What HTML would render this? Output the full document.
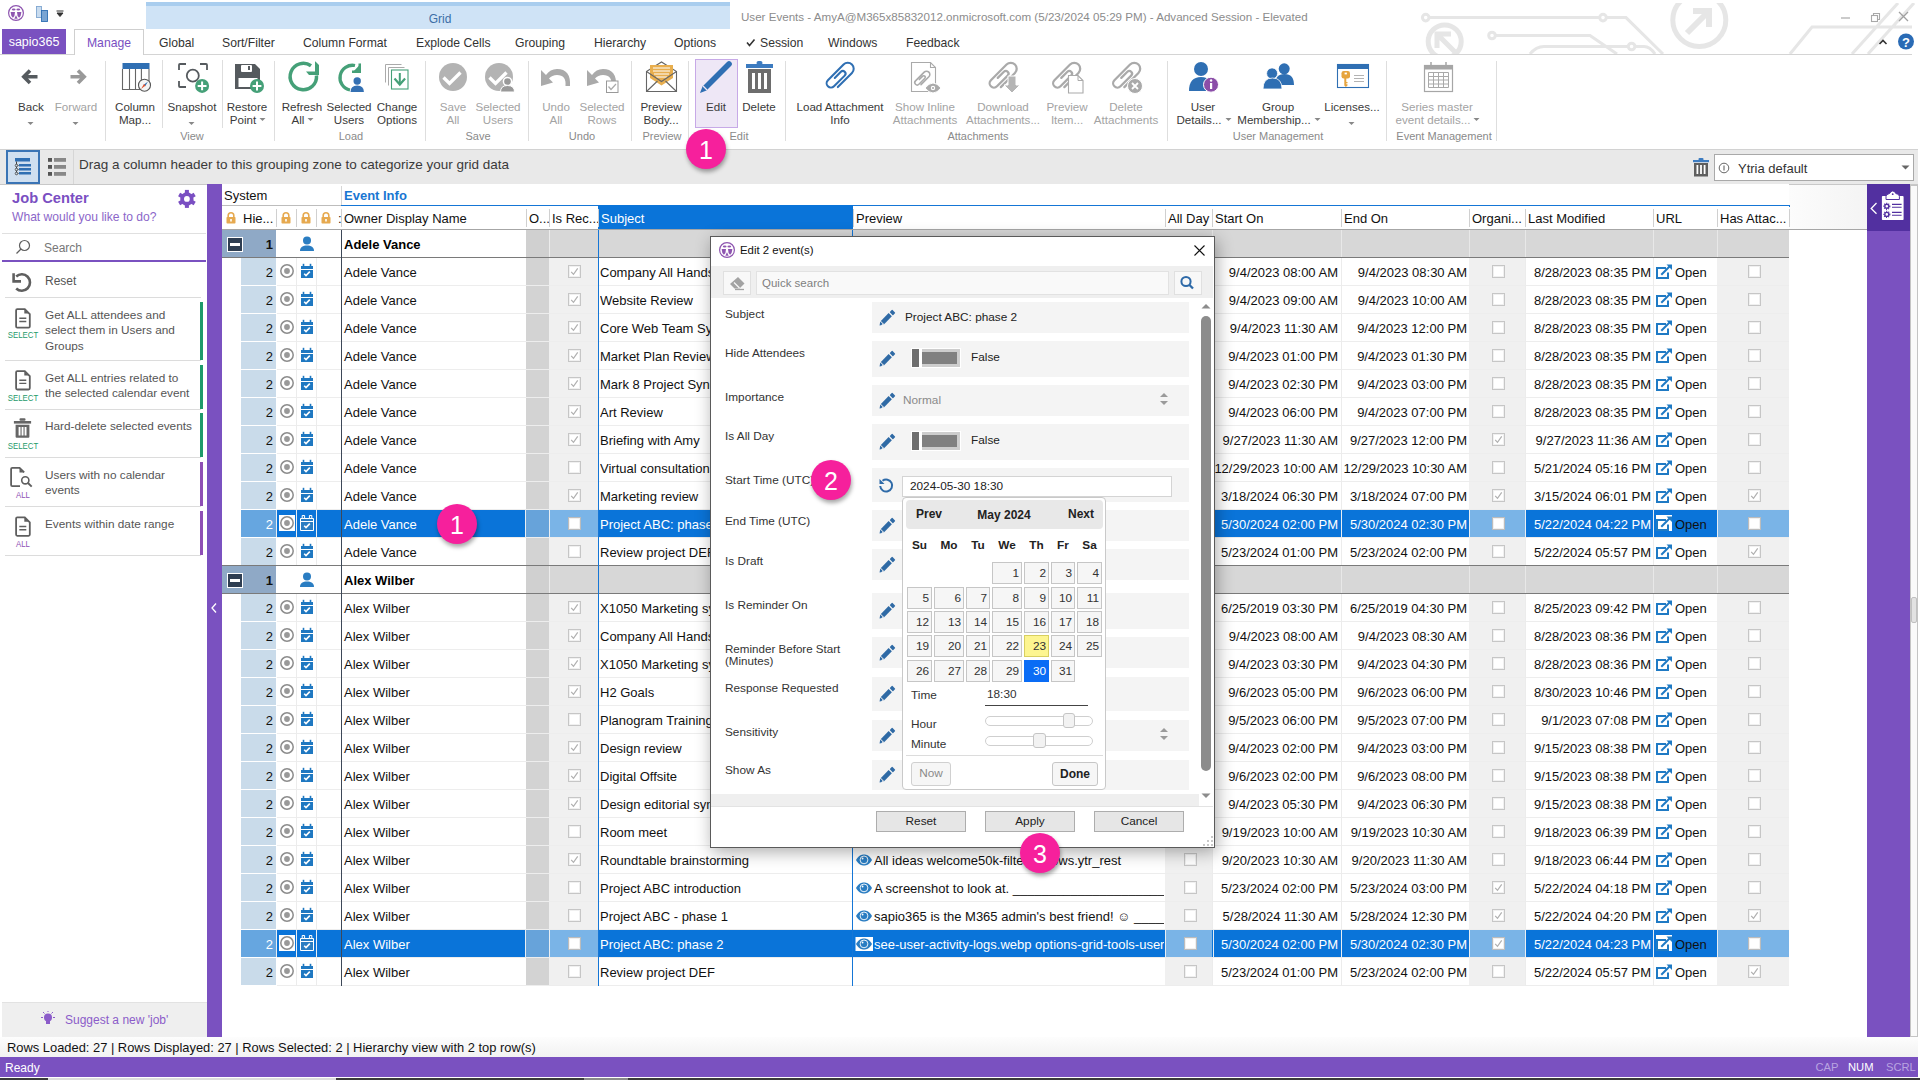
<!DOCTYPE html><html><head><meta charset="utf-8"><style>
*{margin:0;padding:0;box-sizing:border-box}
html,body{width:1920px;height:1080px;overflow:hidden;background:#fff;font-family:"Liberation Sans",sans-serif}
#r{position:relative;width:1920px;height:1080px;overflow:hidden}
#r div{position:absolute}
#r svg{position:absolute;overflow:visible}
.t{white-space:pre}
</style></head><body><div id="r"><div style="left:146px;top:2px;width:584px;height:4px;background:#a9cdee"></div><div style="left:146px;top:6px;width:584px;height:23px;background:#cfe3f6"></div><div class="t" style="left:140px;width:600px;text-align:center;top:11.0px;font-size:12px;line-height:16px;color:#3c6ea6;">Grid</div><div class="t" style="left:741px;top:9.0px;font-size:11.6px;line-height:15px;color:#8c8c8c;">User Events - AmyA@M365x85832012.onmicrosoft.com (5/23/2024 05:29 PM) - Advanced Session - Elevated</div><div style="left:0px;top:54px;width:1912px;height:1px;background:#d4d4d4"></div><div style="left:2px;top:29px;width:64px;height:25px;background:#7a51c0"></div><div class="t" style="left:-266px;width:600px;text-align:center;top:33.5px;font-size:12.5px;line-height:16px;color:#fff;">sapio365</div><div style="left:74px;top:29px;width:70px;height:26px;background:#fff;border:1px solid #cfcfcf;border-bottom:none"></div><div class="t" style="left:-191px;width:600px;text-align:center;top:34.5px;font-size:12.2px;line-height:16px;color:#7a4fc2;">Manage</div><div class="t" style="left:159px;top:34.5px;font-size:12.2px;line-height:16px;color:#333;">Global</div><div class="t" style="left:222px;top:34.5px;font-size:12.2px;line-height:16px;color:#333;">Sort/Filter</div><div class="t" style="left:303px;top:34.5px;font-size:12.2px;line-height:16px;color:#333;">Column Format</div><div class="t" style="left:416px;top:34.5px;font-size:12.2px;line-height:16px;color:#333;">Explode Cells</div><div class="t" style="left:515px;top:34.5px;font-size:12.2px;line-height:16px;color:#333;">Grouping</div><div class="t" style="left:594px;top:34.5px;font-size:12.2px;line-height:16px;color:#333;">Hierarchy</div><div class="t" style="left:674px;top:34.5px;font-size:12.2px;line-height:16px;color:#333;">Options</div><div class="t" style="left:760px;top:34.5px;font-size:12.2px;line-height:16px;color:#333;">Session</div><div class="t" style="left:828px;top:34.5px;font-size:12.2px;line-height:16px;color:#333;">Windows</div><div class="t" style="left:906px;top:34.5px;font-size:12.2px;line-height:16px;color:#333;">Feedback</div><div style="left:695px;top:59px;width:43px;height:69px;background:#eee7f6;border:1px solid #c7a9e7"></div><div class="t" style="left:-269px;width:600px;text-align:center;top:98.8px;font-size:11.6px;line-height:15px;color:#3a3a3a;">Back</div><svg style="left:27px;top:122px" width="8" height="4"><path d="M0.5 0h6l-3 3z" fill="#888"/></svg><div class="t" style="left:-224px;width:600px;text-align:center;top:98.8px;font-size:11.6px;line-height:15px;color:#a3a3a3;">Forward</div><svg style="left:72px;top:122px" width="8" height="4"><path d="M0.5 0h6l-3 3z" fill="#888"/></svg><div class="t" style="left:-165px;width:600px;text-align:center;top:98.8px;font-size:11.6px;line-height:15px;color:#3a3a3a;">Column</div><div class="t" style="left:-165px;width:600px;text-align:center;top:111.8px;font-size:11.6px;line-height:15px;color:#3a3a3a;">Map...</div><div class="t" style="left:-108px;width:600px;text-align:center;top:98.8px;font-size:11.6px;line-height:15px;color:#3a3a3a;">Snapshot</div><svg style="left:188px;top:122px" width="8" height="4"><path d="M0.5 0h6l-3 3z" fill="#888"/></svg><div class="t" style="left:-53px;width:600px;text-align:center;top:98.8px;font-size:11.6px;line-height:15px;color:#3a3a3a;">Restore</div><div class="t" style="left:-57px;width:600px;text-align:center;top:111.8px;font-size:11.6px;line-height:15px;color:#3a3a3a;">Point</div><svg style="left:259.21946875px;top:118px" width="8" height="4"><path d="M0.5 0h6l-3 3z" fill="#888"/></svg><div class="t" style="left:2px;width:600px;text-align:center;top:98.8px;font-size:11.6px;line-height:15px;color:#3a3a3a;">Refresh</div><div class="t" style="left:-2px;width:600px;text-align:center;top:111.8px;font-size:11.6px;line-height:15px;color:#3a3a3a;">All</div><svg style="left:307.44615625px;top:118px" width="8" height="4"><path d="M0.5 0h6l-3 3z" fill="#888"/></svg><div class="t" style="left:49px;width:600px;text-align:center;top:98.8px;font-size:11.6px;line-height:15px;color:#3a3a3a;">Selected</div><div class="t" style="left:49px;width:600px;text-align:center;top:111.8px;font-size:11.6px;line-height:15px;color:#3a3a3a;">Users</div><div class="t" style="left:97px;width:600px;text-align:center;top:98.8px;font-size:11.6px;line-height:15px;color:#3a3a3a;">Change</div><div class="t" style="left:97px;width:600px;text-align:center;top:111.8px;font-size:11.6px;line-height:15px;color:#3a3a3a;">Options</div><div class="t" style="left:153px;width:600px;text-align:center;top:98.8px;font-size:11.6px;line-height:15px;color:#a3a3a3;">Save</div><div class="t" style="left:153px;width:600px;text-align:center;top:111.8px;font-size:11.6px;line-height:15px;color:#a3a3a3;">All</div><div class="t" style="left:198px;width:600px;text-align:center;top:98.8px;font-size:11.6px;line-height:15px;color:#a3a3a3;">Selected</div><div class="t" style="left:198px;width:600px;text-align:center;top:111.8px;font-size:11.6px;line-height:15px;color:#a3a3a3;">Users</div><div class="t" style="left:256px;width:600px;text-align:center;top:98.8px;font-size:11.6px;line-height:15px;color:#a3a3a3;">Undo</div><div class="t" style="left:256px;width:600px;text-align:center;top:111.8px;font-size:11.6px;line-height:15px;color:#a3a3a3;">All</div><div class="t" style="left:302px;width:600px;text-align:center;top:98.8px;font-size:11.6px;line-height:15px;color:#a3a3a3;">Selected</div><div class="t" style="left:302px;width:600px;text-align:center;top:111.8px;font-size:11.6px;line-height:15px;color:#a3a3a3;">Rows</div><div class="t" style="left:361px;width:600px;text-align:center;top:98.8px;font-size:11.6px;line-height:15px;color:#3a3a3a;">Preview</div><div class="t" style="left:361px;width:600px;text-align:center;top:111.8px;font-size:11.6px;line-height:15px;color:#3a3a3a;">Body...</div><div class="t" style="left:416px;width:600px;text-align:center;top:98.8px;font-size:11.6px;line-height:15px;color:#3a3a3a;">Edit</div><div class="t" style="left:459px;width:600px;text-align:center;top:98.8px;font-size:11.6px;line-height:15px;color:#3a3a3a;">Delete</div><div class="t" style="left:540px;width:600px;text-align:center;top:98.8px;font-size:11.6px;line-height:15px;color:#3a3a3a;">Load Attachment</div><div class="t" style="left:540px;width:600px;text-align:center;top:111.8px;font-size:11.6px;line-height:15px;color:#3a3a3a;">Info</div><div class="t" style="left:625px;width:600px;text-align:center;top:98.8px;font-size:11.6px;line-height:15px;color:#a3a3a3;">Show Inline</div><div class="t" style="left:625px;width:600px;text-align:center;top:111.8px;font-size:11.6px;line-height:15px;color:#a3a3a3;">Attachments</div><div class="t" style="left:703px;width:600px;text-align:center;top:98.8px;font-size:11.6px;line-height:15px;color:#a3a3a3;">Download</div><div class="t" style="left:703px;width:600px;text-align:center;top:111.8px;font-size:11.6px;line-height:15px;color:#a3a3a3;">Attachments...</div><div class="t" style="left:767px;width:600px;text-align:center;top:98.8px;font-size:11.6px;line-height:15px;color:#a3a3a3;">Preview</div><div class="t" style="left:767px;width:600px;text-align:center;top:111.8px;font-size:11.6px;line-height:15px;color:#a3a3a3;">Item...</div><div class="t" style="left:826px;width:600px;text-align:center;top:98.8px;font-size:11.6px;line-height:15px;color:#a3a3a3;">Delete</div><div class="t" style="left:826px;width:600px;text-align:center;top:111.8px;font-size:11.6px;line-height:15px;color:#a3a3a3;">Attachments</div><div class="t" style="left:903px;width:600px;text-align:center;top:98.8px;font-size:11.6px;line-height:15px;color:#3a3a3a;">User</div><div class="t" style="left:899px;width:600px;text-align:center;top:111.8px;font-size:11.6px;line-height:15px;color:#3a3a3a;">Details...</div><svg style="left:1224.562px;top:118px" width="8" height="4"><path d="M0.5 0h6l-3 3z" fill="#888"/></svg><div class="t" style="left:978px;width:600px;text-align:center;top:98.8px;font-size:11.6px;line-height:15px;color:#3a3a3a;">Group</div><div class="t" style="left:974px;width:600px;text-align:center;top:111.8px;font-size:11.6px;line-height:15px;color:#3a3a3a;">Membership...</div><svg style="left:1313.743px;top:118px" width="8" height="4"><path d="M0.5 0h6l-3 3z" fill="#888"/></svg><div class="t" style="left:1052px;width:600px;text-align:center;top:98.8px;font-size:11.6px;line-height:15px;color:#3a3a3a;">Licenses...</div><svg style="left:1348px;top:122px" width="8" height="4"><path d="M0.5 0h6l-3 3z" fill="#888"/></svg><div class="t" style="left:1137px;width:600px;text-align:center;top:98.8px;font-size:11.6px;line-height:15px;color:#a3a3a3;">Series master</div><div class="t" style="left:1133px;width:600px;text-align:center;top:111.8px;font-size:11.6px;line-height:15px;color:#a3a3a3;">event details...</div><svg style="left:1473.3973125px;top:118px" width="8" height="4"><path d="M0.5 0h6l-3 3z" fill="#888"/></svg><div class="t" style="left:-108px;width:600px;text-align:center;top:129.0px;font-size:11px;line-height:14px;color:#8a8a8a;">View</div><div class="t" style="left:51px;width:600px;text-align:center;top:129.0px;font-size:11px;line-height:14px;color:#8a8a8a;">Load</div><div class="t" style="left:178px;width:600px;text-align:center;top:129.0px;font-size:11px;line-height:14px;color:#8a8a8a;">Save</div><div class="t" style="left:282px;width:600px;text-align:center;top:129.0px;font-size:11px;line-height:14px;color:#8a8a8a;">Undo</div><div class="t" style="left:362px;width:600px;text-align:center;top:129.0px;font-size:11px;line-height:14px;color:#8a8a8a;">Preview</div><div class="t" style="left:439px;width:600px;text-align:center;top:129.0px;font-size:11px;line-height:14px;color:#8a8a8a;">Edit</div><div class="t" style="left:678px;width:600px;text-align:center;top:129.0px;font-size:11px;line-height:14px;color:#8a8a8a;">Attachments</div><div class="t" style="left:978px;width:600px;text-align:center;top:129.0px;font-size:11px;line-height:14px;color:#8a8a8a;">User Management</div><div class="t" style="left:1144px;width:600px;text-align:center;top:129.0px;font-size:11px;line-height:14px;color:#8a8a8a;">Event Management</div><div style="left:105px;top:61px;width:1px;height:80px;background:#dedede"></div><div style="left:162px;top:60px;width:1px;height:68px;background:#dedede"></div><div style="left:222px;top:60px;width:1px;height:68px;background:#dedede"></div><div style="left:274px;top:61px;width:1px;height:80px;background:#dedede"></div><div style="left:425px;top:61px;width:1px;height:80px;background:#dedede"></div><div style="left:528px;top:61px;width:1px;height:80px;background:#dedede"></div><div style="left:631px;top:61px;width:1px;height:80px;background:#dedede"></div><div style="left:688px;top:61px;width:1px;height:80px;background:#dedede"></div><div style="left:785px;top:61px;width:1px;height:80px;background:#dedede"></div><div style="left:1167px;top:61px;width:1px;height:80px;background:#dedede"></div><div style="left:1386px;top:61px;width:1px;height:80px;background:#dedede"></div><div style="left:1496px;top:61px;width:1px;height:80px;background:#dedede"></div><div style="left:0px;top:149px;width:1918px;height:36px;background:#e9e9e9;border-top:1px solid #d2d2d2;border-bottom:1px solid #c8c8c8"></div><div style="left:6px;top:150px;width:34px;height:34px;background:#cfdff0;border:2px solid #3a74b5"></div><div style="left:40px;top:150px;width:34px;height:34px;background:#e9e9e9;border-right:1px solid #d6d6d6"></div><div class="t" style="left:79px;top:156.0px;font-size:13.5px;line-height:18px;color:#3a3a3a;">Drag a column header to this grouping zone to categorize your grid data</div><div style="left:1714px;top:154px;width:200px;height:27px;background:#fff;border:1px solid #a9a9a9"></div><div class="t" style="left:1738px;top:159.5px;font-size:13px;line-height:17px;color:#333;">Ytria default</div><div style="left:207px;top:184px;width:15px;height:853px;background:#7a51c0"></div><div class="t" style="left:12px;top:189.0px;font-size:14.7px;line-height:19px;color:#7a4fc2;font-weight:bold;">Job Center</div><div class="t" style="left:12px;top:208.5px;font-size:12.1px;line-height:16px;color:#8b66c9;">What would you like to do?</div><div style="left:2px;top:233px;width:204px;height:1px;background:#e0e0e0"></div><div class="t" style="left:44px;top:239.5px;font-size:12px;line-height:16px;color:#777;">Search</div><div style="left:2px;top:260px;width:204px;height:2px;background:#7a51c0"></div><div class="t" style="left:45px;top:273.0px;font-size:12px;line-height:16px;color:#555;">Reset</div><div style="left:5px;top:297px;width:196px;height:1px;background:#dcdcdc"></div><div class="t" style="left:45px;top:307.5px;font-size:11.8px;line-height:15px;color:#555;">Get ALL attendees and</div><div class="t" style="left:45px;top:323.0px;font-size:11.8px;line-height:15px;color:#555;">select them in Users and</div><div class="t" style="left:45px;top:338.5px;font-size:11.8px;line-height:15px;color:#555;">Groups</div><div style="left:200px;top:302px;width:3px;height:58px;background:#1e9a6a"></div><div style="left:5px;top:360px;width:196px;height:1px;background:#dcdcdc"></div><div class="t" style="left:-277.5px;width:600px;text-align:center;top:329.0px;font-size:9.3px;line-height:12px;color:#1e9a6a;transform:scaleX(0.84);">SELECT</div><div class="t" style="left:45px;top:370.5px;font-size:11.8px;line-height:15px;color:#555;">Get ALL entries related to</div><div class="t" style="left:45px;top:386.0px;font-size:11.8px;line-height:15px;color:#555;">the selected calendar event</div><div style="left:200px;top:365px;width:3px;height:44px;background:#1e9a6a"></div><div style="left:5px;top:409px;width:196px;height:1px;background:#dcdcdc"></div><div class="t" style="left:-277.5px;width:600px;text-align:center;top:392.0px;font-size:9.3px;line-height:12px;color:#1e9a6a;transform:scaleX(0.84);">SELECT</div><div class="t" style="left:45px;top:418.5px;font-size:11.8px;line-height:15px;color:#555;">Hard-delete selected events</div><div style="left:200px;top:413px;width:3px;height:44px;background:#1e9a6a"></div><div style="left:5px;top:457px;width:196px;height:1px;background:#dcdcdc"></div><div class="t" style="left:-277.5px;width:600px;text-align:center;top:440.0px;font-size:9.3px;line-height:12px;color:#1e9a6a;transform:scaleX(0.84);">SELECT</div><div class="t" style="left:45px;top:467.5px;font-size:11.8px;line-height:15px;color:#555;">Users with no calendar</div><div class="t" style="left:45px;top:483.0px;font-size:11.8px;line-height:15px;color:#555;">events</div><div style="left:200px;top:462px;width:3px;height:44px;background:#8e4fb5"></div><div style="left:5px;top:506px;width:196px;height:1px;background:#dcdcdc"></div><div class="t" style="left:-277.5px;width:600px;text-align:center;top:489.0px;font-size:9.3px;line-height:12px;color:#8e4fb5;transform:scaleX(0.84);">ALL</div><div class="t" style="left:45px;top:516.5px;font-size:11.8px;line-height:15px;color:#555;">Events within date range</div><div style="left:200px;top:511px;width:3px;height:44px;background:#8e4fb5"></div><div style="left:5px;top:555px;width:196px;height:1px;background:#dcdcdc"></div><div class="t" style="left:-277.5px;width:600px;text-align:center;top:538.0px;font-size:9.3px;line-height:12px;color:#8e4fb5;transform:scaleX(0.84);">ALL</div><div style="left:2px;top:1002px;width:205px;height:35px;background:#efefef;border-top:1px solid #e2e2e2"></div><div class="t" style="left:65px;top:1012.0px;font-size:12px;line-height:16px;color:#8b5cc9;">Suggest a new &#x27;job&#x27;</div><div style="left:222px;top:184px;width:1567px;height:22px;background:#fff"></div><div style="left:1789px;top:185px;width:78px;height:44px;background:linear-gradient(90deg,#fcfcfc,#f4f4f4)"></div><div class="t" style="left:224px;top:187.0px;font-size:13px;line-height:17px;color:#111;">System</div><div style="left:341px;top:186px;width:1px;height:20px;background:#d6d6d6"></div><div class="t" style="left:344px;top:187.0px;font-size:13px;line-height:17px;color:#1976d2;font-weight:bold;">Event Info</div><div style="left:222px;top:205px;width:119px;height:1px;background:#bdbdbd"></div><div style="left:341px;top:205px;width:1449px;height:2px;background:#1576d6"></div><div style="left:222px;top:206px;width:1567px;height:24px;background:#fff"></div><div style="left:222px;top:229px;width:1645px;height:1px;background:#a6a6a6"></div><div style="left:598px;top:205px;width:255px;height:24px;background:#0a74d9"></div><div class="t" style="left:243px;top:209.5px;font-size:13px;line-height:17px;color:#111;">Hie...</div><div style="left:276px;top:209px;width:1px;height:18px;background:#d0d0d0"></div><div class="t" style="left:279px;top:209.5px;font-size:13px;line-height:17px;color:#111;"></div><div style="left:296px;top:209px;width:1px;height:18px;background:#d0d0d0"></div><div class="t" style="left:299px;top:209.5px;font-size:13px;line-height:17px;color:#111;"></div><div style="left:316px;top:209px;width:1px;height:18px;background:#d0d0d0"></div><div class="t" style="left:338px;top:209.5px;font-size:13px;line-height:17px;color:#111;">:</div><div style="left:341px;top:209px;width:1px;height:18px;background:#d0d0d0"></div><div class="t" style="left:344px;top:209.5px;font-size:13px;line-height:17px;color:#111;">Owner Display Name</div><div style="left:526px;top:209px;width:1px;height:18px;background:#d0d0d0"></div><div class="t" style="left:529px;top:209.5px;font-size:13px;line-height:17px;color:#111;">O...</div><div style="left:549px;top:209px;width:1px;height:18px;background:#d0d0d0"></div><div class="t" style="left:552px;top:209.5px;font-size:13px;line-height:17px;color:#111;">Is Rec...</div><div style="left:598px;top:209px;width:1px;height:18px;background:#d0d0d0"></div><div class="t" style="left:601px;top:209.5px;font-size:13px;line-height:17px;color:#fff;">Subject</div><div style="left:853px;top:209px;width:1px;height:18px;background:#d0d0d0"></div><div class="t" style="left:856px;top:209.5px;font-size:13px;line-height:17px;color:#111;">Preview</div><div style="left:1165px;top:209px;width:1px;height:18px;background:#d0d0d0"></div><div class="t" style="left:1168px;top:209.5px;font-size:13px;line-height:17px;color:#111;">All Day</div><div style="left:1212px;top:209px;width:1px;height:18px;background:#d0d0d0"></div><div class="t" style="left:1215px;top:209.5px;font-size:13px;line-height:17px;color:#111;">Start On</div><div style="left:1341px;top:209px;width:1px;height:18px;background:#d0d0d0"></div><div class="t" style="left:1344px;top:209.5px;font-size:13px;line-height:17px;color:#111;">End On</div><div style="left:1469px;top:209px;width:1px;height:18px;background:#d0d0d0"></div><div class="t" style="left:1472px;top:209.5px;font-size:13px;line-height:17px;color:#111;">Organi...</div><div style="left:1525px;top:209px;width:1px;height:18px;background:#d0d0d0"></div><div class="t" style="left:1528px;top:209.5px;font-size:13px;line-height:17px;color:#111;">Last Modified</div><div style="left:1653px;top:209px;width:1px;height:18px;background:#d0d0d0"></div><div class="t" style="left:1656px;top:209.5px;font-size:13px;line-height:17px;color:#111;">URL</div><div style="left:1717px;top:209px;width:1px;height:18px;background:#d0d0d0"></div><div class="t" style="left:1720px;top:209.5px;font-size:13px;line-height:17px;color:#111;">Has Attac...</div><div style="left:1789px;top:209px;width:1px;height:18px;background:#d0d0d0"></div><svg style="left:226px;top:212px" width="10" height="12"><path d="M2.2 5V3.5a2.8 2.8 0 0 1 5.6 0V5" fill="none" stroke="#e6a94f" stroke-width="1.6"/><rect x="0.5" y="5" width="9" height="6.5" rx="0.8" fill="#e6a94f"/><rect x="4.2" y="7" width="1.6" height="2.5" fill="#fff"/></svg><svg style="left:281px;top:212px" width="10" height="12"><path d="M2.2 5V3.5a2.8 2.8 0 0 1 5.6 0V5" fill="none" stroke="#e6a94f" stroke-width="1.6"/><rect x="0.5" y="5" width="9" height="6.5" rx="0.8" fill="#e6a94f"/><rect x="4.2" y="7" width="1.6" height="2.5" fill="#fff"/></svg><svg style="left:301px;top:212px" width="10" height="12"><path d="M2.2 5V3.5a2.8 2.8 0 0 1 5.6 0V5" fill="none" stroke="#e6a94f" stroke-width="1.6"/><rect x="0.5" y="5" width="9" height="6.5" rx="0.8" fill="#e6a94f"/><rect x="4.2" y="7" width="1.6" height="2.5" fill="#fff"/></svg><svg style="left:321px;top:212px" width="10" height="12"><path d="M2.2 5V3.5a2.8 2.8 0 0 1 5.6 0V5" fill="none" stroke="#e6a94f" stroke-width="1.6"/><rect x="0.5" y="5" width="9" height="6.5" rx="0.8" fill="#e6a94f"/><rect x="4.2" y="7" width="1.6" height="2.5" fill="#fff"/></svg><div style="left:222px;top:230px;width:1567px;height:28px;background:#fff;border-bottom:1px solid #7a7a7a"></div><div style="left:222px;top:230px;width:54px;height:27px;background:#8fa9c6"></div><div style="left:227px;top:237px;width:16px;height:15px;background:#2f3e52;border:1px solid #fff"></div><div style="left:230px;top:243px;width:10px;height:3px;background:#fff"></div><div class="t" style="right:1647px;top:235.5px;font-size:13px;line-height:17px;color:#111;font-weight:bold;">1</div><svg style="left:307px;top:244px" width="1" height="1"><circle cx="0" cy="-3.5" r="4" fill="#2a7dc2"/><path d="M-7 7c0-4 3-5.5 7-5.5s7 1.5 7 5.5z" fill="#2a7dc2"/></svg><div class="t" style="left:344px;top:235.5px;font-size:13px;line-height:17px;color:#000;font-weight:bold;">Adele Vance</div><div style="left:526px;top:230px;width:23px;height:27px;background:#d0d0d0"></div><div style="left:549px;top:230px;width:1240px;height:27px;background:#d7d7d7"></div><div style="left:549px;top:230px;width:1px;height:27px;background:#ececec"></div><div style="left:1212px;top:230px;width:1px;height:27px;background:#e8e8e8"></div><div style="left:1341px;top:230px;width:1px;height:27px;background:#e8e8e8"></div><div style="left:1469px;top:230px;width:1px;height:27px;background:#e8e8e8"></div><div style="left:1525px;top:230px;width:1px;height:27px;background:#e8e8e8"></div><div style="left:1653px;top:230px;width:1px;height:27px;background:#e8e8e8"></div><div style="left:1717px;top:230px;width:1px;height:27px;background:#e8e8e8"></div><div style="left:241px;top:258px;width:35px;height:27px;background:#c9dbea"></div><div style="left:526px;top:258px;width:23px;height:28px;background:#d3d3d3"></div><div style="left:549px;top:258px;width:49px;height:28px;background:#f0f0f0"></div><div style="left:1165px;top:258px;width:47px;height:28px;background:#f0f0f0"></div><div style="left:1469px;top:258px;width:56px;height:28px;background:#f0f0f0"></div><div style="left:1717px;top:258px;width:72px;height:28px;background:#f0f0f0"></div><div style="left:277px;top:285px;width:1512px;height:1px;background:#ededed"></div><div style="left:296px;top:258px;width:1px;height:28px;background:#ececec"></div><div style="left:316px;top:258px;width:1px;height:28px;background:#ececec"></div><div style="left:1212px;top:258px;width:1px;height:28px;background:#ececec"></div><div style="left:1341px;top:258px;width:1px;height:28px;background:#ececec"></div><div style="left:1525px;top:258px;width:1px;height:28px;background:#ececec"></div><div style="left:1653px;top:258px;width:1px;height:28px;background:#ececec"></div><div class="t" style="right:1647px;top:264.0px;font-size:13px;line-height:17px;color:#111;">2</div><svg style="left:287px;top:271px" width="1" height="1"><circle cx="0" cy="0" r="6.2" fill="none" stroke="#8c8c8c" stroke-width="1.5"/><circle cx="0" cy="0" r="2.9" fill="#999"/></svg><svg style="left:307px;top:271px" width="1" height="1"><rect x="-6" y="-5" width="12" height="3" fill="#1f78c1"/><rect x="-4.3" y="-7.2" width="1.6" height="2.5" fill="#1f78c1"/><rect x="2.7" y="-7.2" width="1.6" height="2.5" fill="#1f78c1"/><rect x="-6" y="-1" width="12" height="8" fill="#1f78c1"/><path d="M-2.8 2.8l1.8 1.8 3.8-4" stroke="#fff" stroke-width="1.6" fill="none"/></svg><div class="t" style="left:344px;top:264.0px;font-size:13px;line-height:17px;color:#111;">Adele Vance</div><svg style="left:568px;top:265px" width="13" height="13"><rect x="0.5" y="0.5" width="12" height="12" fill="#fff" stroke="#c6c6c6"/><rect x="1.5" y="1.5" width="10" height="10" fill="none" stroke="#f0f0f0"/><path d="M3.2 6.8l2.3 2.6 4.2-6" stroke="#b0b0b0" stroke-width="1.2" fill="none"/></svg><div class="t" style="left:600px;top:264px;width:252px;overflow:hidden;font-size:13px;line-height:18px;color:#111">Company All Hands</div><svg style="left:1184px;top:265px" width="13" height="13"><rect x="0.5" y="0.5" width="12" height="12" fill="#fff" stroke="#c6c6c6"/><rect x="1.5" y="1.5" width="10" height="10" fill="none" stroke="#f0f0f0"/></svg><div class="t" style="right:582px;top:264.0px;font-size:13px;line-height:17px;color:#111;">9/4/2023 08:00 AM</div><div class="t" style="right:453px;top:264.0px;font-size:13px;line-height:17px;color:#111;">9/4/2023 08:30 AM</div><svg style="left:1492px;top:265px" width="13" height="13"><rect x="0.5" y="0.5" width="12" height="12" fill="#fff" stroke="#c6c6c6"/><rect x="1.5" y="1.5" width="10" height="10" fill="none" stroke="#f0f0f0"/></svg><div class="t" style="right:269px;top:264.0px;font-size:13px;line-height:17px;color:#111;">8/28/2023 08:35 PM</div><svg style="left:1656px;top:258px" width="18" height="24"><path d="M10 10H1V20H12V14.5" fill="none" stroke="#1f7ac4" stroke-width="2"/><path d="M5.3 16.7L13.5 8.5" stroke="#1f7ac4" stroke-width="2"/><path d="M10.5 6.6h5.5v5.5z" fill="#1f7ac4"/></svg><div class="t" style="left:1675px;top:264.0px;font-size:13px;line-height:17px;color:#111;">Open</div><svg style="left:1748px;top:265px" width="13" height="13"><rect x="0.5" y="0.5" width="12" height="12" fill="#fff" stroke="#c6c6c6"/><rect x="1.5" y="1.5" width="10" height="10" fill="none" stroke="#f0f0f0"/></svg><div style="left:241px;top:286px;width:35px;height:27px;background:#c9dbea"></div><div style="left:526px;top:286px;width:23px;height:28px;background:#d3d3d3"></div><div style="left:549px;top:286px;width:49px;height:28px;background:#f0f0f0"></div><div style="left:1165px;top:286px;width:47px;height:28px;background:#f0f0f0"></div><div style="left:1469px;top:286px;width:56px;height:28px;background:#f0f0f0"></div><div style="left:1717px;top:286px;width:72px;height:28px;background:#f0f0f0"></div><div style="left:277px;top:313px;width:1512px;height:1px;background:#ededed"></div><div style="left:296px;top:286px;width:1px;height:28px;background:#ececec"></div><div style="left:316px;top:286px;width:1px;height:28px;background:#ececec"></div><div style="left:1212px;top:286px;width:1px;height:28px;background:#ececec"></div><div style="left:1341px;top:286px;width:1px;height:28px;background:#ececec"></div><div style="left:1525px;top:286px;width:1px;height:28px;background:#ececec"></div><div style="left:1653px;top:286px;width:1px;height:28px;background:#ececec"></div><div class="t" style="right:1647px;top:292.0px;font-size:13px;line-height:17px;color:#111;">2</div><svg style="left:287px;top:299px" width="1" height="1"><circle cx="0" cy="0" r="6.2" fill="none" stroke="#8c8c8c" stroke-width="1.5"/><circle cx="0" cy="0" r="2.9" fill="#999"/></svg><svg style="left:307px;top:299px" width="1" height="1"><rect x="-6" y="-5" width="12" height="3" fill="#1f78c1"/><rect x="-4.3" y="-7.2" width="1.6" height="2.5" fill="#1f78c1"/><rect x="2.7" y="-7.2" width="1.6" height="2.5" fill="#1f78c1"/><rect x="-6" y="-1" width="12" height="8" fill="#1f78c1"/><path d="M-2.8 2.8l1.8 1.8 3.8-4" stroke="#fff" stroke-width="1.6" fill="none"/></svg><div class="t" style="left:344px;top:292.0px;font-size:13px;line-height:17px;color:#111;">Adele Vance</div><svg style="left:568px;top:293px" width="13" height="13"><rect x="0.5" y="0.5" width="12" height="12" fill="#fff" stroke="#c6c6c6"/><rect x="1.5" y="1.5" width="10" height="10" fill="none" stroke="#f0f0f0"/><path d="M3.2 6.8l2.3 2.6 4.2-6" stroke="#b0b0b0" stroke-width="1.2" fill="none"/></svg><div class="t" style="left:600px;top:292px;width:252px;overflow:hidden;font-size:13px;line-height:18px;color:#111">Website Review</div><svg style="left:1184px;top:293px" width="13" height="13"><rect x="0.5" y="0.5" width="12" height="12" fill="#fff" stroke="#c6c6c6"/><rect x="1.5" y="1.5" width="10" height="10" fill="none" stroke="#f0f0f0"/></svg><div class="t" style="right:582px;top:292.0px;font-size:13px;line-height:17px;color:#111;">9/4/2023 09:00 AM</div><div class="t" style="right:453px;top:292.0px;font-size:13px;line-height:17px;color:#111;">9/4/2023 10:00 AM</div><svg style="left:1492px;top:293px" width="13" height="13"><rect x="0.5" y="0.5" width="12" height="12" fill="#fff" stroke="#c6c6c6"/><rect x="1.5" y="1.5" width="10" height="10" fill="none" stroke="#f0f0f0"/></svg><div class="t" style="right:269px;top:292.0px;font-size:13px;line-height:17px;color:#111;">8/28/2023 08:35 PM</div><svg style="left:1656px;top:286px" width="18" height="24"><path d="M10 10H1V20H12V14.5" fill="none" stroke="#1f7ac4" stroke-width="2"/><path d="M5.3 16.7L13.5 8.5" stroke="#1f7ac4" stroke-width="2"/><path d="M10.5 6.6h5.5v5.5z" fill="#1f7ac4"/></svg><div class="t" style="left:1675px;top:292.0px;font-size:13px;line-height:17px;color:#111;">Open</div><svg style="left:1748px;top:293px" width="13" height="13"><rect x="0.5" y="0.5" width="12" height="12" fill="#fff" stroke="#c6c6c6"/><rect x="1.5" y="1.5" width="10" height="10" fill="none" stroke="#f0f0f0"/></svg><div style="left:241px;top:314px;width:35px;height:27px;background:#c9dbea"></div><div style="left:526px;top:314px;width:23px;height:28px;background:#d3d3d3"></div><div style="left:549px;top:314px;width:49px;height:28px;background:#f0f0f0"></div><div style="left:1165px;top:314px;width:47px;height:28px;background:#f0f0f0"></div><div style="left:1469px;top:314px;width:56px;height:28px;background:#f0f0f0"></div><div style="left:1717px;top:314px;width:72px;height:28px;background:#f0f0f0"></div><div style="left:277px;top:341px;width:1512px;height:1px;background:#ededed"></div><div style="left:296px;top:314px;width:1px;height:28px;background:#ececec"></div><div style="left:316px;top:314px;width:1px;height:28px;background:#ececec"></div><div style="left:1212px;top:314px;width:1px;height:28px;background:#ececec"></div><div style="left:1341px;top:314px;width:1px;height:28px;background:#ececec"></div><div style="left:1525px;top:314px;width:1px;height:28px;background:#ececec"></div><div style="left:1653px;top:314px;width:1px;height:28px;background:#ececec"></div><div class="t" style="right:1647px;top:320.0px;font-size:13px;line-height:17px;color:#111;">2</div><svg style="left:287px;top:327px" width="1" height="1"><circle cx="0" cy="0" r="6.2" fill="none" stroke="#8c8c8c" stroke-width="1.5"/><circle cx="0" cy="0" r="2.9" fill="#999"/></svg><svg style="left:307px;top:327px" width="1" height="1"><rect x="-6" y="-5" width="12" height="3" fill="#1f78c1"/><rect x="-4.3" y="-7.2" width="1.6" height="2.5" fill="#1f78c1"/><rect x="2.7" y="-7.2" width="1.6" height="2.5" fill="#1f78c1"/><rect x="-6" y="-1" width="12" height="8" fill="#1f78c1"/><path d="M-2.8 2.8l1.8 1.8 3.8-4" stroke="#fff" stroke-width="1.6" fill="none"/></svg><div class="t" style="left:344px;top:320.0px;font-size:13px;line-height:17px;color:#111;">Adele Vance</div><svg style="left:568px;top:321px" width="13" height="13"><rect x="0.5" y="0.5" width="12" height="12" fill="#fff" stroke="#c6c6c6"/><rect x="1.5" y="1.5" width="10" height="10" fill="none" stroke="#f0f0f0"/><path d="M3.2 6.8l2.3 2.6 4.2-6" stroke="#b0b0b0" stroke-width="1.2" fill="none"/></svg><div class="t" style="left:600px;top:320px;width:252px;overflow:hidden;font-size:13px;line-height:18px;color:#111">Core Web Team Sync</div><svg style="left:1184px;top:321px" width="13" height="13"><rect x="0.5" y="0.5" width="12" height="12" fill="#fff" stroke="#c6c6c6"/><rect x="1.5" y="1.5" width="10" height="10" fill="none" stroke="#f0f0f0"/></svg><div class="t" style="right:582px;top:320.0px;font-size:13px;line-height:17px;color:#111;">9/4/2023 11:30 AM</div><div class="t" style="right:453px;top:320.0px;font-size:13px;line-height:17px;color:#111;">9/4/2023 12:00 PM</div><svg style="left:1492px;top:321px" width="13" height="13"><rect x="0.5" y="0.5" width="12" height="12" fill="#fff" stroke="#c6c6c6"/><rect x="1.5" y="1.5" width="10" height="10" fill="none" stroke="#f0f0f0"/></svg><div class="t" style="right:269px;top:320.0px;font-size:13px;line-height:17px;color:#111;">8/28/2023 08:35 PM</div><svg style="left:1656px;top:314px" width="18" height="24"><path d="M10 10H1V20H12V14.5" fill="none" stroke="#1f7ac4" stroke-width="2"/><path d="M5.3 16.7L13.5 8.5" stroke="#1f7ac4" stroke-width="2"/><path d="M10.5 6.6h5.5v5.5z" fill="#1f7ac4"/></svg><div class="t" style="left:1675px;top:320.0px;font-size:13px;line-height:17px;color:#111;">Open</div><svg style="left:1748px;top:321px" width="13" height="13"><rect x="0.5" y="0.5" width="12" height="12" fill="#fff" stroke="#c6c6c6"/><rect x="1.5" y="1.5" width="10" height="10" fill="none" stroke="#f0f0f0"/></svg><div style="left:241px;top:342px;width:35px;height:27px;background:#c9dbea"></div><div style="left:526px;top:342px;width:23px;height:28px;background:#d3d3d3"></div><div style="left:549px;top:342px;width:49px;height:28px;background:#f0f0f0"></div><div style="left:1165px;top:342px;width:47px;height:28px;background:#f0f0f0"></div><div style="left:1469px;top:342px;width:56px;height:28px;background:#f0f0f0"></div><div style="left:1717px;top:342px;width:72px;height:28px;background:#f0f0f0"></div><div style="left:277px;top:369px;width:1512px;height:1px;background:#ededed"></div><div style="left:296px;top:342px;width:1px;height:28px;background:#ececec"></div><div style="left:316px;top:342px;width:1px;height:28px;background:#ececec"></div><div style="left:1212px;top:342px;width:1px;height:28px;background:#ececec"></div><div style="left:1341px;top:342px;width:1px;height:28px;background:#ececec"></div><div style="left:1525px;top:342px;width:1px;height:28px;background:#ececec"></div><div style="left:1653px;top:342px;width:1px;height:28px;background:#ececec"></div><div class="t" style="right:1647px;top:348.0px;font-size:13px;line-height:17px;color:#111;">2</div><svg style="left:287px;top:355px" width="1" height="1"><circle cx="0" cy="0" r="6.2" fill="none" stroke="#8c8c8c" stroke-width="1.5"/><circle cx="0" cy="0" r="2.9" fill="#999"/></svg><svg style="left:307px;top:355px" width="1" height="1"><rect x="-6" y="-5" width="12" height="3" fill="#1f78c1"/><rect x="-4.3" y="-7.2" width="1.6" height="2.5" fill="#1f78c1"/><rect x="2.7" y="-7.2" width="1.6" height="2.5" fill="#1f78c1"/><rect x="-6" y="-1" width="12" height="8" fill="#1f78c1"/><path d="M-2.8 2.8l1.8 1.8 3.8-4" stroke="#fff" stroke-width="1.6" fill="none"/></svg><div class="t" style="left:344px;top:348.0px;font-size:13px;line-height:17px;color:#111;">Adele Vance</div><svg style="left:568px;top:349px" width="13" height="13"><rect x="0.5" y="0.5" width="12" height="12" fill="#fff" stroke="#c6c6c6"/><rect x="1.5" y="1.5" width="10" height="10" fill="none" stroke="#f0f0f0"/><path d="M3.2 6.8l2.3 2.6 4.2-6" stroke="#b0b0b0" stroke-width="1.2" fill="none"/></svg><div class="t" style="left:600px;top:348px;width:252px;overflow:hidden;font-size:13px;line-height:18px;color:#111">Market Plan Review</div><svg style="left:1184px;top:349px" width="13" height="13"><rect x="0.5" y="0.5" width="12" height="12" fill="#fff" stroke="#c6c6c6"/><rect x="1.5" y="1.5" width="10" height="10" fill="none" stroke="#f0f0f0"/></svg><div class="t" style="right:582px;top:348.0px;font-size:13px;line-height:17px;color:#111;">9/4/2023 01:00 PM</div><div class="t" style="right:453px;top:348.0px;font-size:13px;line-height:17px;color:#111;">9/4/2023 01:30 PM</div><svg style="left:1492px;top:349px" width="13" height="13"><rect x="0.5" y="0.5" width="12" height="12" fill="#fff" stroke="#c6c6c6"/><rect x="1.5" y="1.5" width="10" height="10" fill="none" stroke="#f0f0f0"/></svg><div class="t" style="right:269px;top:348.0px;font-size:13px;line-height:17px;color:#111;">8/28/2023 08:35 PM</div><svg style="left:1656px;top:342px" width="18" height="24"><path d="M10 10H1V20H12V14.5" fill="none" stroke="#1f7ac4" stroke-width="2"/><path d="M5.3 16.7L13.5 8.5" stroke="#1f7ac4" stroke-width="2"/><path d="M10.5 6.6h5.5v5.5z" fill="#1f7ac4"/></svg><div class="t" style="left:1675px;top:348.0px;font-size:13px;line-height:17px;color:#111;">Open</div><svg style="left:1748px;top:349px" width="13" height="13"><rect x="0.5" y="0.5" width="12" height="12" fill="#fff" stroke="#c6c6c6"/><rect x="1.5" y="1.5" width="10" height="10" fill="none" stroke="#f0f0f0"/></svg><div style="left:241px;top:370px;width:35px;height:27px;background:#c9dbea"></div><div style="left:526px;top:370px;width:23px;height:28px;background:#d3d3d3"></div><div style="left:549px;top:370px;width:49px;height:28px;background:#f0f0f0"></div><div style="left:1165px;top:370px;width:47px;height:28px;background:#f0f0f0"></div><div style="left:1469px;top:370px;width:56px;height:28px;background:#f0f0f0"></div><div style="left:1717px;top:370px;width:72px;height:28px;background:#f0f0f0"></div><div style="left:277px;top:397px;width:1512px;height:1px;background:#ededed"></div><div style="left:296px;top:370px;width:1px;height:28px;background:#ececec"></div><div style="left:316px;top:370px;width:1px;height:28px;background:#ececec"></div><div style="left:1212px;top:370px;width:1px;height:28px;background:#ececec"></div><div style="left:1341px;top:370px;width:1px;height:28px;background:#ececec"></div><div style="left:1525px;top:370px;width:1px;height:28px;background:#ececec"></div><div style="left:1653px;top:370px;width:1px;height:28px;background:#ececec"></div><div class="t" style="right:1647px;top:376.0px;font-size:13px;line-height:17px;color:#111;">2</div><svg style="left:287px;top:383px" width="1" height="1"><circle cx="0" cy="0" r="6.2" fill="none" stroke="#8c8c8c" stroke-width="1.5"/><circle cx="0" cy="0" r="2.9" fill="#999"/></svg><svg style="left:307px;top:383px" width="1" height="1"><rect x="-6" y="-5" width="12" height="3" fill="#1f78c1"/><rect x="-4.3" y="-7.2" width="1.6" height="2.5" fill="#1f78c1"/><rect x="2.7" y="-7.2" width="1.6" height="2.5" fill="#1f78c1"/><rect x="-6" y="-1" width="12" height="8" fill="#1f78c1"/><path d="M-2.8 2.8l1.8 1.8 3.8-4" stroke="#fff" stroke-width="1.6" fill="none"/></svg><div class="t" style="left:344px;top:376.0px;font-size:13px;line-height:17px;color:#111;">Adele Vance</div><svg style="left:568px;top:377px" width="13" height="13"><rect x="0.5" y="0.5" width="12" height="12" fill="#fff" stroke="#c6c6c6"/><rect x="1.5" y="1.5" width="10" height="10" fill="none" stroke="#f0f0f0"/><path d="M3.2 6.8l2.3 2.6 4.2-6" stroke="#b0b0b0" stroke-width="1.2" fill="none"/></svg><div class="t" style="left:600px;top:376px;width:252px;overflow:hidden;font-size:13px;line-height:18px;color:#111">Mark 8 Project Sync</div><svg style="left:1184px;top:377px" width="13" height="13"><rect x="0.5" y="0.5" width="12" height="12" fill="#fff" stroke="#c6c6c6"/><rect x="1.5" y="1.5" width="10" height="10" fill="none" stroke="#f0f0f0"/></svg><div class="t" style="right:582px;top:376.0px;font-size:13px;line-height:17px;color:#111;">9/4/2023 02:30 PM</div><div class="t" style="right:453px;top:376.0px;font-size:13px;line-height:17px;color:#111;">9/4/2023 03:00 PM</div><svg style="left:1492px;top:377px" width="13" height="13"><rect x="0.5" y="0.5" width="12" height="12" fill="#fff" stroke="#c6c6c6"/><rect x="1.5" y="1.5" width="10" height="10" fill="none" stroke="#f0f0f0"/></svg><div class="t" style="right:269px;top:376.0px;font-size:13px;line-height:17px;color:#111;">8/28/2023 08:35 PM</div><svg style="left:1656px;top:370px" width="18" height="24"><path d="M10 10H1V20H12V14.5" fill="none" stroke="#1f7ac4" stroke-width="2"/><path d="M5.3 16.7L13.5 8.5" stroke="#1f7ac4" stroke-width="2"/><path d="M10.5 6.6h5.5v5.5z" fill="#1f7ac4"/></svg><div class="t" style="left:1675px;top:376.0px;font-size:13px;line-height:17px;color:#111;">Open</div><svg style="left:1748px;top:377px" width="13" height="13"><rect x="0.5" y="0.5" width="12" height="12" fill="#fff" stroke="#c6c6c6"/><rect x="1.5" y="1.5" width="10" height="10" fill="none" stroke="#f0f0f0"/></svg><div style="left:241px;top:398px;width:35px;height:27px;background:#c9dbea"></div><div style="left:526px;top:398px;width:23px;height:28px;background:#d3d3d3"></div><div style="left:549px;top:398px;width:49px;height:28px;background:#f0f0f0"></div><div style="left:1165px;top:398px;width:47px;height:28px;background:#f0f0f0"></div><div style="left:1469px;top:398px;width:56px;height:28px;background:#f0f0f0"></div><div style="left:1717px;top:398px;width:72px;height:28px;background:#f0f0f0"></div><div style="left:277px;top:425px;width:1512px;height:1px;background:#ededed"></div><div style="left:296px;top:398px;width:1px;height:28px;background:#ececec"></div><div style="left:316px;top:398px;width:1px;height:28px;background:#ececec"></div><div style="left:1212px;top:398px;width:1px;height:28px;background:#ececec"></div><div style="left:1341px;top:398px;width:1px;height:28px;background:#ececec"></div><div style="left:1525px;top:398px;width:1px;height:28px;background:#ececec"></div><div style="left:1653px;top:398px;width:1px;height:28px;background:#ececec"></div><div class="t" style="right:1647px;top:404.0px;font-size:13px;line-height:17px;color:#111;">2</div><svg style="left:287px;top:411px" width="1" height="1"><circle cx="0" cy="0" r="6.2" fill="none" stroke="#8c8c8c" stroke-width="1.5"/><circle cx="0" cy="0" r="2.9" fill="#999"/></svg><svg style="left:307px;top:411px" width="1" height="1"><rect x="-6" y="-5" width="12" height="3" fill="#1f78c1"/><rect x="-4.3" y="-7.2" width="1.6" height="2.5" fill="#1f78c1"/><rect x="2.7" y="-7.2" width="1.6" height="2.5" fill="#1f78c1"/><rect x="-6" y="-1" width="12" height="8" fill="#1f78c1"/><path d="M-2.8 2.8l1.8 1.8 3.8-4" stroke="#fff" stroke-width="1.6" fill="none"/></svg><div class="t" style="left:344px;top:404.0px;font-size:13px;line-height:17px;color:#111;">Adele Vance</div><svg style="left:568px;top:405px" width="13" height="13"><rect x="0.5" y="0.5" width="12" height="12" fill="#fff" stroke="#c6c6c6"/><rect x="1.5" y="1.5" width="10" height="10" fill="none" stroke="#f0f0f0"/><path d="M3.2 6.8l2.3 2.6 4.2-6" stroke="#b0b0b0" stroke-width="1.2" fill="none"/></svg><div class="t" style="left:600px;top:404px;width:252px;overflow:hidden;font-size:13px;line-height:18px;color:#111">Art Review</div><svg style="left:1184px;top:405px" width="13" height="13"><rect x="0.5" y="0.5" width="12" height="12" fill="#fff" stroke="#c6c6c6"/><rect x="1.5" y="1.5" width="10" height="10" fill="none" stroke="#f0f0f0"/></svg><div class="t" style="right:582px;top:404.0px;font-size:13px;line-height:17px;color:#111;">9/4/2023 06:00 PM</div><div class="t" style="right:453px;top:404.0px;font-size:13px;line-height:17px;color:#111;">9/4/2023 07:00 PM</div><svg style="left:1492px;top:405px" width="13" height="13"><rect x="0.5" y="0.5" width="12" height="12" fill="#fff" stroke="#c6c6c6"/><rect x="1.5" y="1.5" width="10" height="10" fill="none" stroke="#f0f0f0"/></svg><div class="t" style="right:269px;top:404.0px;font-size:13px;line-height:17px;color:#111;">8/28/2023 08:35 PM</div><svg style="left:1656px;top:398px" width="18" height="24"><path d="M10 10H1V20H12V14.5" fill="none" stroke="#1f7ac4" stroke-width="2"/><path d="M5.3 16.7L13.5 8.5" stroke="#1f7ac4" stroke-width="2"/><path d="M10.5 6.6h5.5v5.5z" fill="#1f7ac4"/></svg><div class="t" style="left:1675px;top:404.0px;font-size:13px;line-height:17px;color:#111;">Open</div><svg style="left:1748px;top:405px" width="13" height="13"><rect x="0.5" y="0.5" width="12" height="12" fill="#fff" stroke="#c6c6c6"/><rect x="1.5" y="1.5" width="10" height="10" fill="none" stroke="#f0f0f0"/></svg><div style="left:241px;top:426px;width:35px;height:27px;background:#c9dbea"></div><div style="left:526px;top:426px;width:23px;height:28px;background:#d3d3d3"></div><div style="left:549px;top:426px;width:49px;height:28px;background:#f0f0f0"></div><div style="left:1165px;top:426px;width:47px;height:28px;background:#f0f0f0"></div><div style="left:1469px;top:426px;width:56px;height:28px;background:#f0f0f0"></div><div style="left:1717px;top:426px;width:72px;height:28px;background:#f0f0f0"></div><div style="left:277px;top:453px;width:1512px;height:1px;background:#ededed"></div><div style="left:296px;top:426px;width:1px;height:28px;background:#ececec"></div><div style="left:316px;top:426px;width:1px;height:28px;background:#ececec"></div><div style="left:1212px;top:426px;width:1px;height:28px;background:#ececec"></div><div style="left:1341px;top:426px;width:1px;height:28px;background:#ececec"></div><div style="left:1525px;top:426px;width:1px;height:28px;background:#ececec"></div><div style="left:1653px;top:426px;width:1px;height:28px;background:#ececec"></div><div class="t" style="right:1647px;top:432.0px;font-size:13px;line-height:17px;color:#111;">2</div><svg style="left:287px;top:439px" width="1" height="1"><circle cx="0" cy="0" r="6.2" fill="none" stroke="#8c8c8c" stroke-width="1.5"/><circle cx="0" cy="0" r="2.9" fill="#999"/></svg><svg style="left:307px;top:439px" width="1" height="1"><rect x="-6" y="-5" width="12" height="3" fill="#1f78c1"/><rect x="-4.3" y="-7.2" width="1.6" height="2.5" fill="#1f78c1"/><rect x="2.7" y="-7.2" width="1.6" height="2.5" fill="#1f78c1"/><rect x="-6" y="-1" width="12" height="8" fill="#1f78c1"/><path d="M-2.8 2.8l1.8 1.8 3.8-4" stroke="#fff" stroke-width="1.6" fill="none"/></svg><div class="t" style="left:344px;top:432.0px;font-size:13px;line-height:17px;color:#111;">Adele Vance</div><svg style="left:568px;top:433px" width="13" height="13"><rect x="0.5" y="0.5" width="12" height="12" fill="#fff" stroke="#c6c6c6"/><rect x="1.5" y="1.5" width="10" height="10" fill="none" stroke="#f0f0f0"/><path d="M3.2 6.8l2.3 2.6 4.2-6" stroke="#b0b0b0" stroke-width="1.2" fill="none"/></svg><div class="t" style="left:600px;top:432px;width:252px;overflow:hidden;font-size:13px;line-height:18px;color:#111">Briefing with Amy</div><svg style="left:1184px;top:433px" width="13" height="13"><rect x="0.5" y="0.5" width="12" height="12" fill="#fff" stroke="#c6c6c6"/><rect x="1.5" y="1.5" width="10" height="10" fill="none" stroke="#f0f0f0"/></svg><div class="t" style="right:582px;top:432.0px;font-size:13px;line-height:17px;color:#111;">9/27/2023 11:30 AM</div><div class="t" style="right:453px;top:432.0px;font-size:13px;line-height:17px;color:#111;">9/27/2023 12:00 PM</div><svg style="left:1492px;top:433px" width="13" height="13"><rect x="0.5" y="0.5" width="12" height="12" fill="#fff" stroke="#c6c6c6"/><rect x="1.5" y="1.5" width="10" height="10" fill="none" stroke="#f0f0f0"/><path d="M3.2 6.8l2.3 2.6 4.2-6" stroke="#b0b0b0" stroke-width="1.2" fill="none"/></svg><div class="t" style="right:269px;top:432.0px;font-size:13px;line-height:17px;color:#111;">9/27/2023 11:36 AM</div><svg style="left:1656px;top:426px" width="18" height="24"><path d="M10 10H1V20H12V14.5" fill="none" stroke="#1f7ac4" stroke-width="2"/><path d="M5.3 16.7L13.5 8.5" stroke="#1f7ac4" stroke-width="2"/><path d="M10.5 6.6h5.5v5.5z" fill="#1f7ac4"/></svg><div class="t" style="left:1675px;top:432.0px;font-size:13px;line-height:17px;color:#111;">Open</div><svg style="left:1748px;top:433px" width="13" height="13"><rect x="0.5" y="0.5" width="12" height="12" fill="#fff" stroke="#c6c6c6"/><rect x="1.5" y="1.5" width="10" height="10" fill="none" stroke="#f0f0f0"/></svg><div style="left:241px;top:454px;width:35px;height:27px;background:#c9dbea"></div><div style="left:526px;top:454px;width:23px;height:28px;background:#d3d3d3"></div><div style="left:549px;top:454px;width:49px;height:28px;background:#f0f0f0"></div><div style="left:1165px;top:454px;width:47px;height:28px;background:#f0f0f0"></div><div style="left:1469px;top:454px;width:56px;height:28px;background:#f0f0f0"></div><div style="left:1717px;top:454px;width:72px;height:28px;background:#f0f0f0"></div><div style="left:277px;top:481px;width:1512px;height:1px;background:#ededed"></div><div style="left:296px;top:454px;width:1px;height:28px;background:#ececec"></div><div style="left:316px;top:454px;width:1px;height:28px;background:#ececec"></div><div style="left:1212px;top:454px;width:1px;height:28px;background:#ececec"></div><div style="left:1341px;top:454px;width:1px;height:28px;background:#ececec"></div><div style="left:1525px;top:454px;width:1px;height:28px;background:#ececec"></div><div style="left:1653px;top:454px;width:1px;height:28px;background:#ececec"></div><div class="t" style="right:1647px;top:460.0px;font-size:13px;line-height:17px;color:#111;">2</div><svg style="left:287px;top:467px" width="1" height="1"><circle cx="0" cy="0" r="6.2" fill="none" stroke="#8c8c8c" stroke-width="1.5"/><circle cx="0" cy="0" r="2.9" fill="#999"/></svg><svg style="left:307px;top:467px" width="1" height="1"><rect x="-6" y="-5" width="12" height="3" fill="#1f78c1"/><rect x="-4.3" y="-7.2" width="1.6" height="2.5" fill="#1f78c1"/><rect x="2.7" y="-7.2" width="1.6" height="2.5" fill="#1f78c1"/><rect x="-6" y="-1" width="12" height="8" fill="#1f78c1"/><path d="M-2.8 2.8l1.8 1.8 3.8-4" stroke="#fff" stroke-width="1.6" fill="none"/></svg><div class="t" style="left:344px;top:460.0px;font-size:13px;line-height:17px;color:#111;">Adele Vance</div><svg style="left:568px;top:461px" width="13" height="13"><rect x="0.5" y="0.5" width="12" height="12" fill="#fff" stroke="#c6c6c6"/><rect x="1.5" y="1.5" width="10" height="10" fill="none" stroke="#f0f0f0"/></svg><div class="t" style="left:600px;top:460px;width:252px;overflow:hidden;font-size:13px;line-height:18px;color:#111">Virtual consultation</div><svg style="left:1184px;top:461px" width="13" height="13"><rect x="0.5" y="0.5" width="12" height="12" fill="#fff" stroke="#c6c6c6"/><rect x="1.5" y="1.5" width="10" height="10" fill="none" stroke="#f0f0f0"/></svg><div class="t" style="right:582px;top:460.0px;font-size:13px;line-height:17px;color:#111;">12/29/2023 10:00 AM</div><div class="t" style="right:453px;top:460.0px;font-size:13px;line-height:17px;color:#111;">12/29/2023 10:30 AM</div><svg style="left:1492px;top:461px" width="13" height="13"><rect x="0.5" y="0.5" width="12" height="12" fill="#fff" stroke="#c6c6c6"/><rect x="1.5" y="1.5" width="10" height="10" fill="none" stroke="#f0f0f0"/></svg><div class="t" style="right:269px;top:460.0px;font-size:13px;line-height:17px;color:#111;">5/21/2024 05:16 PM</div><svg style="left:1656px;top:454px" width="18" height="24"><path d="M10 10H1V20H12V14.5" fill="none" stroke="#1f7ac4" stroke-width="2"/><path d="M5.3 16.7L13.5 8.5" stroke="#1f7ac4" stroke-width="2"/><path d="M10.5 6.6h5.5v5.5z" fill="#1f7ac4"/></svg><div class="t" style="left:1675px;top:460.0px;font-size:13px;line-height:17px;color:#111;">Open</div><svg style="left:1748px;top:461px" width="13" height="13"><rect x="0.5" y="0.5" width="12" height="12" fill="#fff" stroke="#c6c6c6"/><rect x="1.5" y="1.5" width="10" height="10" fill="none" stroke="#f0f0f0"/></svg><div style="left:241px;top:482px;width:35px;height:27px;background:#c9dbea"></div><div style="left:526px;top:482px;width:23px;height:28px;background:#d3d3d3"></div><div style="left:549px;top:482px;width:49px;height:28px;background:#f0f0f0"></div><div style="left:1165px;top:482px;width:47px;height:28px;background:#f0f0f0"></div><div style="left:1469px;top:482px;width:56px;height:28px;background:#f0f0f0"></div><div style="left:1717px;top:482px;width:72px;height:28px;background:#f0f0f0"></div><div style="left:277px;top:509px;width:1512px;height:1px;background:#ededed"></div><div style="left:296px;top:482px;width:1px;height:28px;background:#ececec"></div><div style="left:316px;top:482px;width:1px;height:28px;background:#ececec"></div><div style="left:1212px;top:482px;width:1px;height:28px;background:#ececec"></div><div style="left:1341px;top:482px;width:1px;height:28px;background:#ececec"></div><div style="left:1525px;top:482px;width:1px;height:28px;background:#ececec"></div><div style="left:1653px;top:482px;width:1px;height:28px;background:#ececec"></div><div class="t" style="right:1647px;top:488.0px;font-size:13px;line-height:17px;color:#111;">2</div><svg style="left:287px;top:495px" width="1" height="1"><circle cx="0" cy="0" r="6.2" fill="none" stroke="#8c8c8c" stroke-width="1.5"/><circle cx="0" cy="0" r="2.9" fill="#999"/></svg><svg style="left:307px;top:495px" width="1" height="1"><rect x="-6" y="-5" width="12" height="3" fill="#1f78c1"/><rect x="-4.3" y="-7.2" width="1.6" height="2.5" fill="#1f78c1"/><rect x="2.7" y="-7.2" width="1.6" height="2.5" fill="#1f78c1"/><rect x="-6" y="-1" width="12" height="8" fill="#1f78c1"/><path d="M-2.8 2.8l1.8 1.8 3.8-4" stroke="#fff" stroke-width="1.6" fill="none"/></svg><div class="t" style="left:344px;top:488.0px;font-size:13px;line-height:17px;color:#111;">Adele Vance</div><svg style="left:568px;top:489px" width="13" height="13"><rect x="0.5" y="0.5" width="12" height="12" fill="#fff" stroke="#c6c6c6"/><rect x="1.5" y="1.5" width="10" height="10" fill="none" stroke="#f0f0f0"/><path d="M3.2 6.8l2.3 2.6 4.2-6" stroke="#b0b0b0" stroke-width="1.2" fill="none"/></svg><div class="t" style="left:600px;top:488px;width:252px;overflow:hidden;font-size:13px;line-height:18px;color:#111">Marketing review</div><svg style="left:1184px;top:489px" width="13" height="13"><rect x="0.5" y="0.5" width="12" height="12" fill="#fff" stroke="#c6c6c6"/><rect x="1.5" y="1.5" width="10" height="10" fill="none" stroke="#f0f0f0"/></svg><div class="t" style="right:582px;top:488.0px;font-size:13px;line-height:17px;color:#111;">3/18/2024 06:30 PM</div><div class="t" style="right:453px;top:488.0px;font-size:13px;line-height:17px;color:#111;">3/18/2024 07:00 PM</div><svg style="left:1492px;top:489px" width="13" height="13"><rect x="0.5" y="0.5" width="12" height="12" fill="#fff" stroke="#c6c6c6"/><rect x="1.5" y="1.5" width="10" height="10" fill="none" stroke="#f0f0f0"/><path d="M3.2 6.8l2.3 2.6 4.2-6" stroke="#b0b0b0" stroke-width="1.2" fill="none"/></svg><div class="t" style="right:269px;top:488.0px;font-size:13px;line-height:17px;color:#111;">3/15/2024 06:01 PM</div><svg style="left:1656px;top:482px" width="18" height="24"><path d="M10 10H1V20H12V14.5" fill="none" stroke="#1f7ac4" stroke-width="2"/><path d="M5.3 16.7L13.5 8.5" stroke="#1f7ac4" stroke-width="2"/><path d="M10.5 6.6h5.5v5.5z" fill="#1f7ac4"/></svg><div class="t" style="left:1675px;top:488.0px;font-size:13px;line-height:17px;color:#111;">Open</div><svg style="left:1748px;top:489px" width="13" height="13"><rect x="0.5" y="0.5" width="12" height="12" fill="#fff" stroke="#c6c6c6"/><rect x="1.5" y="1.5" width="10" height="10" fill="none" stroke="#f0f0f0"/><path d="M3.2 6.8l2.3 2.6 4.2-6" stroke="#b0b0b0" stroke-width="1.2" fill="none"/></svg><div style="left:241px;top:510px;width:1548px;height:27px;background:#0a74d9"></div><div style="left:241px;top:510px;width:35px;height:27px;background:#66a6e0"></div><div style="left:526px;top:510px;width:23px;height:27px;background:#67a3da"></div><div style="left:549px;top:510px;width:49px;height:27px;background:#7ab4e7"></div><div style="left:1165px;top:510px;width:47px;height:27px;background:#7ab4e7"></div><div style="left:1469px;top:510px;width:56px;height:27px;background:#7ab4e7"></div><div style="left:1717px;top:510px;width:72px;height:27px;background:#7ab4e7"></div><div style="left:277px;top:537px;width:1512px;height:1px;background:#ededed"></div><div style="left:276px;top:510px;width:1px;height:27px;background:#e9eef3"></div><div style="left:296px;top:510px;width:1px;height:27px;background:#e9eef3"></div><div style="left:316px;top:510px;width:1px;height:27px;background:#e9eef3"></div><div style="left:525px;top:510px;width:1px;height:27px;background:#e9eef3"></div><div style="left:549px;top:510px;width:1px;height:27px;background:#e9eef3"></div><div style="left:1165px;top:510px;width:1px;height:27px;background:#e9eef3"></div><div style="left:1213px;top:510px;width:1px;height:27px;background:#e9eef3"></div><div style="left:1341px;top:510px;width:1px;height:27px;background:#e9eef3"></div><div style="left:1469px;top:510px;width:1px;height:27px;background:#e9eef3"></div><div style="left:1525px;top:510px;width:1px;height:27px;background:#e9eef3"></div><div style="left:1653px;top:510px;width:1px;height:27px;background:#e9eef3"></div><div style="left:1717px;top:510px;width:1px;height:27px;background:#e9eef3"></div><div class="t" style="right:1647px;top:516.0px;font-size:13px;line-height:17px;color:#fff;">2</div><svg style="left:287px;top:523px" width="1" height="1"><rect x="-8" y="-8" width="16" height="16" fill="#fff"/><circle cx="0" cy="0" r="6.2" fill="none" stroke="#8c8c8c" stroke-width="1.5"/><circle cx="0" cy="0" r="2.9" fill="#999"/></svg><svg style="left:307px;top:523px" width="1" height="1"><path d="M-6.5 -4.5h13v12h-13z" fill="#2a7dc2" stroke="#fff" stroke-width="1"/><path d="M-6.5 -1.5h13" stroke="#fff" stroke-width="1"/><path d="M-4.8 -7.5h2.4v3h-2.4zM2.4 -7.5h2.4v3h-2.4z" fill="#2a7dc2" stroke="#fff" stroke-width="1"/><path d="M-2.8 2.8l1.8 1.8 3.8-4" stroke="#fff" stroke-width="1.6" fill="none"/></svg><div class="t" style="left:344px;top:516.0px;font-size:13px;line-height:17px;color:#fff;">Adele Vance</div><svg style="left:568px;top:517px" width="13" height="13"><rect x="0.5" y="0.5" width="12" height="12" fill="#fff" stroke="#bcbcbc"/><rect x="1.5" y="1.5" width="10" height="10" fill="none" stroke="#f0f0f0"/></svg><div class="t" style="left:600px;top:516px;width:252px;overflow:hidden;font-size:13px;line-height:18px;color:#fff">Project ABC: phase 2</div><svg style="left:1184px;top:517px" width="13" height="13"><rect x="0.5" y="0.5" width="12" height="12" fill="#fff" stroke="#bcbcbc"/><rect x="1.5" y="1.5" width="10" height="10" fill="none" stroke="#f0f0f0"/></svg><div class="t" style="right:582px;top:516.0px;font-size:13px;line-height:17px;color:#fff;">5/30/2024 02:00 PM</div><div class="t" style="right:453px;top:516.0px;font-size:13px;line-height:17px;color:#fff;">5/30/2024 02:30 PM</div><svg style="left:1492px;top:517px" width="13" height="13"><rect x="0.5" y="0.5" width="12" height="12" fill="#fff" stroke="#bcbcbc"/><rect x="1.5" y="1.5" width="10" height="10" fill="none" stroke="#f0f0f0"/></svg><div class="t" style="right:269px;top:516.0px;font-size:13px;line-height:17px;color:#fff;">5/22/2024 04:22 PM</div><svg style="left:1656px;top:510px" width="18" height="24"><rect x="0" y="5" width="16" height="16" fill="#fff"/><path d="M10 10H1V20H12V14.5" fill="none" stroke="#1f7ac4" stroke-width="2"/><path d="M5.3 16.7L13.5 8.5" stroke="#1f7ac4" stroke-width="2"/><path d="M10.5 6.6h5.5v5.5z" fill="#1f7ac4"/></svg><div class="t" style="left:1675px;top:516.0px;font-size:13px;line-height:17px;color:#111;">Open</div><svg style="left:1748px;top:517px" width="13" height="13"><rect x="0.5" y="0.5" width="12" height="12" fill="#fff" stroke="#bcbcbc"/><rect x="1.5" y="1.5" width="10" height="10" fill="none" stroke="#f0f0f0"/></svg><div style="left:241px;top:538px;width:35px;height:27px;background:#c9dbea"></div><div style="left:526px;top:538px;width:23px;height:28px;background:#d3d3d3"></div><div style="left:549px;top:538px;width:49px;height:28px;background:#f0f0f0"></div><div style="left:1165px;top:538px;width:47px;height:28px;background:#f0f0f0"></div><div style="left:1469px;top:538px;width:56px;height:28px;background:#f0f0f0"></div><div style="left:1717px;top:538px;width:72px;height:28px;background:#f0f0f0"></div><div style="left:277px;top:565px;width:1512px;height:1px;background:#ededed"></div><div style="left:296px;top:538px;width:1px;height:28px;background:#ececec"></div><div style="left:316px;top:538px;width:1px;height:28px;background:#ececec"></div><div style="left:1212px;top:538px;width:1px;height:28px;background:#ececec"></div><div style="left:1341px;top:538px;width:1px;height:28px;background:#ececec"></div><div style="left:1525px;top:538px;width:1px;height:28px;background:#ececec"></div><div style="left:1653px;top:538px;width:1px;height:28px;background:#ececec"></div><div class="t" style="right:1647px;top:544.0px;font-size:13px;line-height:17px;color:#111;">2</div><svg style="left:287px;top:551px" width="1" height="1"><circle cx="0" cy="0" r="6.2" fill="none" stroke="#8c8c8c" stroke-width="1.5"/><circle cx="0" cy="0" r="2.9" fill="#999"/></svg><svg style="left:307px;top:551px" width="1" height="1"><rect x="-6" y="-5" width="12" height="3" fill="#1f78c1"/><rect x="-4.3" y="-7.2" width="1.6" height="2.5" fill="#1f78c1"/><rect x="2.7" y="-7.2" width="1.6" height="2.5" fill="#1f78c1"/><rect x="-6" y="-1" width="12" height="8" fill="#1f78c1"/><path d="M-2.8 2.8l1.8 1.8 3.8-4" stroke="#fff" stroke-width="1.6" fill="none"/></svg><div class="t" style="left:344px;top:544.0px;font-size:13px;line-height:17px;color:#111;">Adele Vance</div><svg style="left:568px;top:545px" width="13" height="13"><rect x="0.5" y="0.5" width="12" height="12" fill="#fff" stroke="#c6c6c6"/><rect x="1.5" y="1.5" width="10" height="10" fill="none" stroke="#f0f0f0"/></svg><div class="t" style="left:600px;top:544px;width:252px;overflow:hidden;font-size:13px;line-height:18px;color:#111">Review project DEF</div><svg style="left:1184px;top:545px" width="13" height="13"><rect x="0.5" y="0.5" width="12" height="12" fill="#fff" stroke="#c6c6c6"/><rect x="1.5" y="1.5" width="10" height="10" fill="none" stroke="#f0f0f0"/></svg><div class="t" style="right:582px;top:544.0px;font-size:13px;line-height:17px;color:#111;">5/23/2024 01:00 PM</div><div class="t" style="right:453px;top:544.0px;font-size:13px;line-height:17px;color:#111;">5/23/2024 02:00 PM</div><svg style="left:1492px;top:545px" width="13" height="13"><rect x="0.5" y="0.5" width="12" height="12" fill="#fff" stroke="#c6c6c6"/><rect x="1.5" y="1.5" width="10" height="10" fill="none" stroke="#f0f0f0"/></svg><div class="t" style="right:269px;top:544.0px;font-size:13px;line-height:17px;color:#111;">5/22/2024 05:57 PM</div><svg style="left:1656px;top:538px" width="18" height="24"><path d="M10 10H1V20H12V14.5" fill="none" stroke="#1f7ac4" stroke-width="2"/><path d="M5.3 16.7L13.5 8.5" stroke="#1f7ac4" stroke-width="2"/><path d="M10.5 6.6h5.5v5.5z" fill="#1f7ac4"/></svg><div class="t" style="left:1675px;top:544.0px;font-size:13px;line-height:17px;color:#111;">Open</div><svg style="left:1748px;top:545px" width="13" height="13"><rect x="0.5" y="0.5" width="12" height="12" fill="#fff" stroke="#c6c6c6"/><rect x="1.5" y="1.5" width="10" height="10" fill="none" stroke="#f0f0f0"/><path d="M3.2 6.8l2.3 2.6 4.2-6" stroke="#b0b0b0" stroke-width="1.2" fill="none"/></svg><div style="left:222px;top:566px;width:1567px;height:28px;background:#fff;border-bottom:1px solid #7a7a7a"></div><div style="left:222px;top:565px;width:1567px;height:1px;background:#7a7a7a"></div><div style="left:222px;top:566px;width:54px;height:27px;background:#8fa9c6"></div><div style="left:227px;top:573px;width:16px;height:15px;background:#2f3e52;border:1px solid #fff"></div><div style="left:230px;top:579px;width:10px;height:3px;background:#fff"></div><div class="t" style="right:1647px;top:571.5px;font-size:13px;line-height:17px;color:#111;font-weight:bold;">1</div><svg style="left:307px;top:580px" width="1" height="1"><circle cx="0" cy="-3.5" r="4" fill="#2a7dc2"/><path d="M-7 7c0-4 3-5.5 7-5.5s7 1.5 7 5.5z" fill="#2a7dc2"/></svg><div class="t" style="left:344px;top:571.5px;font-size:13px;line-height:17px;color:#000;font-weight:bold;">Alex Wilber</div><div style="left:526px;top:566px;width:23px;height:27px;background:#d0d0d0"></div><div style="left:549px;top:566px;width:1240px;height:27px;background:#d7d7d7"></div><div style="left:549px;top:566px;width:1px;height:27px;background:#ececec"></div><div style="left:1212px;top:566px;width:1px;height:27px;background:#e8e8e8"></div><div style="left:1341px;top:566px;width:1px;height:27px;background:#e8e8e8"></div><div style="left:1469px;top:566px;width:1px;height:27px;background:#e8e8e8"></div><div style="left:1525px;top:566px;width:1px;height:27px;background:#e8e8e8"></div><div style="left:1653px;top:566px;width:1px;height:27px;background:#e8e8e8"></div><div style="left:1717px;top:566px;width:1px;height:27px;background:#e8e8e8"></div><div style="left:241px;top:594px;width:35px;height:27px;background:#c9dbea"></div><div style="left:526px;top:594px;width:23px;height:28px;background:#d3d3d3"></div><div style="left:549px;top:594px;width:49px;height:28px;background:#f0f0f0"></div><div style="left:1165px;top:594px;width:47px;height:28px;background:#f0f0f0"></div><div style="left:1469px;top:594px;width:56px;height:28px;background:#f0f0f0"></div><div style="left:1717px;top:594px;width:72px;height:28px;background:#f0f0f0"></div><div style="left:277px;top:621px;width:1512px;height:1px;background:#ededed"></div><div style="left:296px;top:594px;width:1px;height:28px;background:#ececec"></div><div style="left:316px;top:594px;width:1px;height:28px;background:#ececec"></div><div style="left:1212px;top:594px;width:1px;height:28px;background:#ececec"></div><div style="left:1341px;top:594px;width:1px;height:28px;background:#ececec"></div><div style="left:1525px;top:594px;width:1px;height:28px;background:#ececec"></div><div style="left:1653px;top:594px;width:1px;height:28px;background:#ececec"></div><div class="t" style="right:1647px;top:600.0px;font-size:13px;line-height:17px;color:#111;">2</div><svg style="left:287px;top:607px" width="1" height="1"><circle cx="0" cy="0" r="6.2" fill="none" stroke="#8c8c8c" stroke-width="1.5"/><circle cx="0" cy="0" r="2.9" fill="#999"/></svg><svg style="left:307px;top:607px" width="1" height="1"><rect x="-6" y="-5" width="12" height="3" fill="#1f78c1"/><rect x="-4.3" y="-7.2" width="1.6" height="2.5" fill="#1f78c1"/><rect x="2.7" y="-7.2" width="1.6" height="2.5" fill="#1f78c1"/><rect x="-6" y="-1" width="12" height="8" fill="#1f78c1"/><path d="M-2.8 2.8l1.8 1.8 3.8-4" stroke="#fff" stroke-width="1.6" fill="none"/></svg><div class="t" style="left:344px;top:600.0px;font-size:13px;line-height:17px;color:#111;">Alex Wilber</div><svg style="left:568px;top:601px" width="13" height="13"><rect x="0.5" y="0.5" width="12" height="12" fill="#fff" stroke="#c6c6c6"/><rect x="1.5" y="1.5" width="10" height="10" fill="none" stroke="#f0f0f0"/><path d="M3.2 6.8l2.3 2.6 4.2-6" stroke="#b0b0b0" stroke-width="1.2" fill="none"/></svg><div class="t" style="left:600px;top:600px;width:252px;overflow:hidden;font-size:13px;line-height:18px;color:#111">X1050 Marketing sync</div><svg style="left:1184px;top:601px" width="13" height="13"><rect x="0.5" y="0.5" width="12" height="12" fill="#fff" stroke="#c6c6c6"/><rect x="1.5" y="1.5" width="10" height="10" fill="none" stroke="#f0f0f0"/></svg><div class="t" style="right:582px;top:600.0px;font-size:13px;line-height:17px;color:#111;">6/25/2019 03:30 PM</div><div class="t" style="right:453px;top:600.0px;font-size:13px;line-height:17px;color:#111;">6/25/2019 04:30 PM</div><svg style="left:1492px;top:601px" width="13" height="13"><rect x="0.5" y="0.5" width="12" height="12" fill="#fff" stroke="#c6c6c6"/><rect x="1.5" y="1.5" width="10" height="10" fill="none" stroke="#f0f0f0"/></svg><div class="t" style="right:269px;top:600.0px;font-size:13px;line-height:17px;color:#111;">8/25/2023 09:42 PM</div><svg style="left:1656px;top:594px" width="18" height="24"><path d="M10 10H1V20H12V14.5" fill="none" stroke="#1f7ac4" stroke-width="2"/><path d="M5.3 16.7L13.5 8.5" stroke="#1f7ac4" stroke-width="2"/><path d="M10.5 6.6h5.5v5.5z" fill="#1f7ac4"/></svg><div class="t" style="left:1675px;top:600.0px;font-size:13px;line-height:17px;color:#111;">Open</div><svg style="left:1748px;top:601px" width="13" height="13"><rect x="0.5" y="0.5" width="12" height="12" fill="#fff" stroke="#c6c6c6"/><rect x="1.5" y="1.5" width="10" height="10" fill="none" stroke="#f0f0f0"/></svg><div style="left:241px;top:622px;width:35px;height:27px;background:#c9dbea"></div><div style="left:526px;top:622px;width:23px;height:28px;background:#d3d3d3"></div><div style="left:549px;top:622px;width:49px;height:28px;background:#f0f0f0"></div><div style="left:1165px;top:622px;width:47px;height:28px;background:#f0f0f0"></div><div style="left:1469px;top:622px;width:56px;height:28px;background:#f0f0f0"></div><div style="left:1717px;top:622px;width:72px;height:28px;background:#f0f0f0"></div><div style="left:277px;top:649px;width:1512px;height:1px;background:#ededed"></div><div style="left:296px;top:622px;width:1px;height:28px;background:#ececec"></div><div style="left:316px;top:622px;width:1px;height:28px;background:#ececec"></div><div style="left:1212px;top:622px;width:1px;height:28px;background:#ececec"></div><div style="left:1341px;top:622px;width:1px;height:28px;background:#ececec"></div><div style="left:1525px;top:622px;width:1px;height:28px;background:#ececec"></div><div style="left:1653px;top:622px;width:1px;height:28px;background:#ececec"></div><div class="t" style="right:1647px;top:628.0px;font-size:13px;line-height:17px;color:#111;">2</div><svg style="left:287px;top:635px" width="1" height="1"><circle cx="0" cy="0" r="6.2" fill="none" stroke="#8c8c8c" stroke-width="1.5"/><circle cx="0" cy="0" r="2.9" fill="#999"/></svg><svg style="left:307px;top:635px" width="1" height="1"><rect x="-6" y="-5" width="12" height="3" fill="#1f78c1"/><rect x="-4.3" y="-7.2" width="1.6" height="2.5" fill="#1f78c1"/><rect x="2.7" y="-7.2" width="1.6" height="2.5" fill="#1f78c1"/><rect x="-6" y="-1" width="12" height="8" fill="#1f78c1"/><path d="M-2.8 2.8l1.8 1.8 3.8-4" stroke="#fff" stroke-width="1.6" fill="none"/></svg><div class="t" style="left:344px;top:628.0px;font-size:13px;line-height:17px;color:#111;">Alex Wilber</div><svg style="left:568px;top:629px" width="13" height="13"><rect x="0.5" y="0.5" width="12" height="12" fill="#fff" stroke="#c6c6c6"/><rect x="1.5" y="1.5" width="10" height="10" fill="none" stroke="#f0f0f0"/><path d="M3.2 6.8l2.3 2.6 4.2-6" stroke="#b0b0b0" stroke-width="1.2" fill="none"/></svg><div class="t" style="left:600px;top:628px;width:252px;overflow:hidden;font-size:13px;line-height:18px;color:#111">Company All Hands</div><svg style="left:1184px;top:629px" width="13" height="13"><rect x="0.5" y="0.5" width="12" height="12" fill="#fff" stroke="#c6c6c6"/><rect x="1.5" y="1.5" width="10" height="10" fill="none" stroke="#f0f0f0"/></svg><div class="t" style="right:582px;top:628.0px;font-size:13px;line-height:17px;color:#111;">9/4/2023 08:00 AM</div><div class="t" style="right:453px;top:628.0px;font-size:13px;line-height:17px;color:#111;">9/4/2023 08:30 AM</div><svg style="left:1492px;top:629px" width="13" height="13"><rect x="0.5" y="0.5" width="12" height="12" fill="#fff" stroke="#c6c6c6"/><rect x="1.5" y="1.5" width="10" height="10" fill="none" stroke="#f0f0f0"/></svg><div class="t" style="right:269px;top:628.0px;font-size:13px;line-height:17px;color:#111;">8/28/2023 08:36 PM</div><svg style="left:1656px;top:622px" width="18" height="24"><path d="M10 10H1V20H12V14.5" fill="none" stroke="#1f7ac4" stroke-width="2"/><path d="M5.3 16.7L13.5 8.5" stroke="#1f7ac4" stroke-width="2"/><path d="M10.5 6.6h5.5v5.5z" fill="#1f7ac4"/></svg><div class="t" style="left:1675px;top:628.0px;font-size:13px;line-height:17px;color:#111;">Open</div><svg style="left:1748px;top:629px" width="13" height="13"><rect x="0.5" y="0.5" width="12" height="12" fill="#fff" stroke="#c6c6c6"/><rect x="1.5" y="1.5" width="10" height="10" fill="none" stroke="#f0f0f0"/></svg><div style="left:241px;top:650px;width:35px;height:27px;background:#c9dbea"></div><div style="left:526px;top:650px;width:23px;height:28px;background:#d3d3d3"></div><div style="left:549px;top:650px;width:49px;height:28px;background:#f0f0f0"></div><div style="left:1165px;top:650px;width:47px;height:28px;background:#f0f0f0"></div><div style="left:1469px;top:650px;width:56px;height:28px;background:#f0f0f0"></div><div style="left:1717px;top:650px;width:72px;height:28px;background:#f0f0f0"></div><div style="left:277px;top:677px;width:1512px;height:1px;background:#ededed"></div><div style="left:296px;top:650px;width:1px;height:28px;background:#ececec"></div><div style="left:316px;top:650px;width:1px;height:28px;background:#ececec"></div><div style="left:1212px;top:650px;width:1px;height:28px;background:#ececec"></div><div style="left:1341px;top:650px;width:1px;height:28px;background:#ececec"></div><div style="left:1525px;top:650px;width:1px;height:28px;background:#ececec"></div><div style="left:1653px;top:650px;width:1px;height:28px;background:#ececec"></div><div class="t" style="right:1647px;top:656.0px;font-size:13px;line-height:17px;color:#111;">2</div><svg style="left:287px;top:663px" width="1" height="1"><circle cx="0" cy="0" r="6.2" fill="none" stroke="#8c8c8c" stroke-width="1.5"/><circle cx="0" cy="0" r="2.9" fill="#999"/></svg><svg style="left:307px;top:663px" width="1" height="1"><rect x="-6" y="-5" width="12" height="3" fill="#1f78c1"/><rect x="-4.3" y="-7.2" width="1.6" height="2.5" fill="#1f78c1"/><rect x="2.7" y="-7.2" width="1.6" height="2.5" fill="#1f78c1"/><rect x="-6" y="-1" width="12" height="8" fill="#1f78c1"/><path d="M-2.8 2.8l1.8 1.8 3.8-4" stroke="#fff" stroke-width="1.6" fill="none"/></svg><div class="t" style="left:344px;top:656.0px;font-size:13px;line-height:17px;color:#111;">Alex Wilber</div><svg style="left:568px;top:657px" width="13" height="13"><rect x="0.5" y="0.5" width="12" height="12" fill="#fff" stroke="#c6c6c6"/><rect x="1.5" y="1.5" width="10" height="10" fill="none" stroke="#f0f0f0"/><path d="M3.2 6.8l2.3 2.6 4.2-6" stroke="#b0b0b0" stroke-width="1.2" fill="none"/></svg><div class="t" style="left:600px;top:656px;width:252px;overflow:hidden;font-size:13px;line-height:18px;color:#111">X1050 Marketing sync</div><svg style="left:1184px;top:657px" width="13" height="13"><rect x="0.5" y="0.5" width="12" height="12" fill="#fff" stroke="#c6c6c6"/><rect x="1.5" y="1.5" width="10" height="10" fill="none" stroke="#f0f0f0"/></svg><div class="t" style="right:582px;top:656.0px;font-size:13px;line-height:17px;color:#111;">9/4/2023 03:30 PM</div><div class="t" style="right:453px;top:656.0px;font-size:13px;line-height:17px;color:#111;">9/4/2023 04:30 PM</div><svg style="left:1492px;top:657px" width="13" height="13"><rect x="0.5" y="0.5" width="12" height="12" fill="#fff" stroke="#c6c6c6"/><rect x="1.5" y="1.5" width="10" height="10" fill="none" stroke="#f0f0f0"/></svg><div class="t" style="right:269px;top:656.0px;font-size:13px;line-height:17px;color:#111;">8/28/2023 08:36 PM</div><svg style="left:1656px;top:650px" width="18" height="24"><path d="M10 10H1V20H12V14.5" fill="none" stroke="#1f7ac4" stroke-width="2"/><path d="M5.3 16.7L13.5 8.5" stroke="#1f7ac4" stroke-width="2"/><path d="M10.5 6.6h5.5v5.5z" fill="#1f7ac4"/></svg><div class="t" style="left:1675px;top:656.0px;font-size:13px;line-height:17px;color:#111;">Open</div><svg style="left:1748px;top:657px" width="13" height="13"><rect x="0.5" y="0.5" width="12" height="12" fill="#fff" stroke="#c6c6c6"/><rect x="1.5" y="1.5" width="10" height="10" fill="none" stroke="#f0f0f0"/></svg><div style="left:241px;top:678px;width:35px;height:27px;background:#c9dbea"></div><div style="left:526px;top:678px;width:23px;height:28px;background:#d3d3d3"></div><div style="left:549px;top:678px;width:49px;height:28px;background:#f0f0f0"></div><div style="left:1165px;top:678px;width:47px;height:28px;background:#f0f0f0"></div><div style="left:1469px;top:678px;width:56px;height:28px;background:#f0f0f0"></div><div style="left:1717px;top:678px;width:72px;height:28px;background:#f0f0f0"></div><div style="left:277px;top:705px;width:1512px;height:1px;background:#ededed"></div><div style="left:296px;top:678px;width:1px;height:28px;background:#ececec"></div><div style="left:316px;top:678px;width:1px;height:28px;background:#ececec"></div><div style="left:1212px;top:678px;width:1px;height:28px;background:#ececec"></div><div style="left:1341px;top:678px;width:1px;height:28px;background:#ececec"></div><div style="left:1525px;top:678px;width:1px;height:28px;background:#ececec"></div><div style="left:1653px;top:678px;width:1px;height:28px;background:#ececec"></div><div class="t" style="right:1647px;top:684.0px;font-size:13px;line-height:17px;color:#111;">2</div><svg style="left:287px;top:691px" width="1" height="1"><circle cx="0" cy="0" r="6.2" fill="none" stroke="#8c8c8c" stroke-width="1.5"/><circle cx="0" cy="0" r="2.9" fill="#999"/></svg><svg style="left:307px;top:691px" width="1" height="1"><rect x="-6" y="-5" width="12" height="3" fill="#1f78c1"/><rect x="-4.3" y="-7.2" width="1.6" height="2.5" fill="#1f78c1"/><rect x="2.7" y="-7.2" width="1.6" height="2.5" fill="#1f78c1"/><rect x="-6" y="-1" width="12" height="8" fill="#1f78c1"/><path d="M-2.8 2.8l1.8 1.8 3.8-4" stroke="#fff" stroke-width="1.6" fill="none"/></svg><div class="t" style="left:344px;top:684.0px;font-size:13px;line-height:17px;color:#111;">Alex Wilber</div><svg style="left:568px;top:685px" width="13" height="13"><rect x="0.5" y="0.5" width="12" height="12" fill="#fff" stroke="#c6c6c6"/><rect x="1.5" y="1.5" width="10" height="10" fill="none" stroke="#f0f0f0"/><path d="M3.2 6.8l2.3 2.6 4.2-6" stroke="#b0b0b0" stroke-width="1.2" fill="none"/></svg><div class="t" style="left:600px;top:684px;width:252px;overflow:hidden;font-size:13px;line-height:18px;color:#111">H2 Goals</div><svg style="left:1184px;top:685px" width="13" height="13"><rect x="0.5" y="0.5" width="12" height="12" fill="#fff" stroke="#c6c6c6"/><rect x="1.5" y="1.5" width="10" height="10" fill="none" stroke="#f0f0f0"/></svg><div class="t" style="right:582px;top:684.0px;font-size:13px;line-height:17px;color:#111;">9/6/2023 05:00 PM</div><div class="t" style="right:453px;top:684.0px;font-size:13px;line-height:17px;color:#111;">9/6/2023 06:00 PM</div><svg style="left:1492px;top:685px" width="13" height="13"><rect x="0.5" y="0.5" width="12" height="12" fill="#fff" stroke="#c6c6c6"/><rect x="1.5" y="1.5" width="10" height="10" fill="none" stroke="#f0f0f0"/></svg><div class="t" style="right:269px;top:684.0px;font-size:13px;line-height:17px;color:#111;">8/30/2023 10:46 PM</div><svg style="left:1656px;top:678px" width="18" height="24"><path d="M10 10H1V20H12V14.5" fill="none" stroke="#1f7ac4" stroke-width="2"/><path d="M5.3 16.7L13.5 8.5" stroke="#1f7ac4" stroke-width="2"/><path d="M10.5 6.6h5.5v5.5z" fill="#1f7ac4"/></svg><div class="t" style="left:1675px;top:684.0px;font-size:13px;line-height:17px;color:#111;">Open</div><svg style="left:1748px;top:685px" width="13" height="13"><rect x="0.5" y="0.5" width="12" height="12" fill="#fff" stroke="#c6c6c6"/><rect x="1.5" y="1.5" width="10" height="10" fill="none" stroke="#f0f0f0"/></svg><div style="left:241px;top:706px;width:35px;height:27px;background:#c9dbea"></div><div style="left:526px;top:706px;width:23px;height:28px;background:#d3d3d3"></div><div style="left:549px;top:706px;width:49px;height:28px;background:#f0f0f0"></div><div style="left:1165px;top:706px;width:47px;height:28px;background:#f0f0f0"></div><div style="left:1469px;top:706px;width:56px;height:28px;background:#f0f0f0"></div><div style="left:1717px;top:706px;width:72px;height:28px;background:#f0f0f0"></div><div style="left:277px;top:733px;width:1512px;height:1px;background:#ededed"></div><div style="left:296px;top:706px;width:1px;height:28px;background:#ececec"></div><div style="left:316px;top:706px;width:1px;height:28px;background:#ececec"></div><div style="left:1212px;top:706px;width:1px;height:28px;background:#ececec"></div><div style="left:1341px;top:706px;width:1px;height:28px;background:#ececec"></div><div style="left:1525px;top:706px;width:1px;height:28px;background:#ececec"></div><div style="left:1653px;top:706px;width:1px;height:28px;background:#ececec"></div><div class="t" style="right:1647px;top:712.0px;font-size:13px;line-height:17px;color:#111;">2</div><svg style="left:287px;top:719px" width="1" height="1"><circle cx="0" cy="0" r="6.2" fill="none" stroke="#8c8c8c" stroke-width="1.5"/><circle cx="0" cy="0" r="2.9" fill="#999"/></svg><svg style="left:307px;top:719px" width="1" height="1"><rect x="-6" y="-5" width="12" height="3" fill="#1f78c1"/><rect x="-4.3" y="-7.2" width="1.6" height="2.5" fill="#1f78c1"/><rect x="2.7" y="-7.2" width="1.6" height="2.5" fill="#1f78c1"/><rect x="-6" y="-1" width="12" height="8" fill="#1f78c1"/><path d="M-2.8 2.8l1.8 1.8 3.8-4" stroke="#fff" stroke-width="1.6" fill="none"/></svg><div class="t" style="left:344px;top:712.0px;font-size:13px;line-height:17px;color:#111;">Alex Wilber</div><svg style="left:568px;top:713px" width="13" height="13"><rect x="0.5" y="0.5" width="12" height="12" fill="#fff" stroke="#c6c6c6"/><rect x="1.5" y="1.5" width="10" height="10" fill="none" stroke="#f0f0f0"/></svg><div class="t" style="left:600px;top:712px;width:252px;overflow:hidden;font-size:13px;line-height:18px;color:#111">Planogram Training</div><svg style="left:1184px;top:713px" width="13" height="13"><rect x="0.5" y="0.5" width="12" height="12" fill="#fff" stroke="#c6c6c6"/><rect x="1.5" y="1.5" width="10" height="10" fill="none" stroke="#f0f0f0"/></svg><div class="t" style="right:582px;top:712.0px;font-size:13px;line-height:17px;color:#111;">9/5/2023 06:00 PM</div><div class="t" style="right:453px;top:712.0px;font-size:13px;line-height:17px;color:#111;">9/5/2023 07:00 PM</div><svg style="left:1492px;top:713px" width="13" height="13"><rect x="0.5" y="0.5" width="12" height="12" fill="#fff" stroke="#c6c6c6"/><rect x="1.5" y="1.5" width="10" height="10" fill="none" stroke="#f0f0f0"/></svg><div class="t" style="right:269px;top:712.0px;font-size:13px;line-height:17px;color:#111;">9/1/2023 07:08 PM</div><svg style="left:1656px;top:706px" width="18" height="24"><path d="M10 10H1V20H12V14.5" fill="none" stroke="#1f7ac4" stroke-width="2"/><path d="M5.3 16.7L13.5 8.5" stroke="#1f7ac4" stroke-width="2"/><path d="M10.5 6.6h5.5v5.5z" fill="#1f7ac4"/></svg><div class="t" style="left:1675px;top:712.0px;font-size:13px;line-height:17px;color:#111;">Open</div><svg style="left:1748px;top:713px" width="13" height="13"><rect x="0.5" y="0.5" width="12" height="12" fill="#fff" stroke="#c6c6c6"/><rect x="1.5" y="1.5" width="10" height="10" fill="none" stroke="#f0f0f0"/></svg><div style="left:241px;top:734px;width:35px;height:27px;background:#c9dbea"></div><div style="left:526px;top:734px;width:23px;height:28px;background:#d3d3d3"></div><div style="left:549px;top:734px;width:49px;height:28px;background:#f0f0f0"></div><div style="left:1165px;top:734px;width:47px;height:28px;background:#f0f0f0"></div><div style="left:1469px;top:734px;width:56px;height:28px;background:#f0f0f0"></div><div style="left:1717px;top:734px;width:72px;height:28px;background:#f0f0f0"></div><div style="left:277px;top:761px;width:1512px;height:1px;background:#ededed"></div><div style="left:296px;top:734px;width:1px;height:28px;background:#ececec"></div><div style="left:316px;top:734px;width:1px;height:28px;background:#ececec"></div><div style="left:1212px;top:734px;width:1px;height:28px;background:#ececec"></div><div style="left:1341px;top:734px;width:1px;height:28px;background:#ececec"></div><div style="left:1525px;top:734px;width:1px;height:28px;background:#ececec"></div><div style="left:1653px;top:734px;width:1px;height:28px;background:#ececec"></div><div class="t" style="right:1647px;top:740.0px;font-size:13px;line-height:17px;color:#111;">2</div><svg style="left:287px;top:747px" width="1" height="1"><circle cx="0" cy="0" r="6.2" fill="none" stroke="#8c8c8c" stroke-width="1.5"/><circle cx="0" cy="0" r="2.9" fill="#999"/></svg><svg style="left:307px;top:747px" width="1" height="1"><rect x="-6" y="-5" width="12" height="3" fill="#1f78c1"/><rect x="-4.3" y="-7.2" width="1.6" height="2.5" fill="#1f78c1"/><rect x="2.7" y="-7.2" width="1.6" height="2.5" fill="#1f78c1"/><rect x="-6" y="-1" width="12" height="8" fill="#1f78c1"/><path d="M-2.8 2.8l1.8 1.8 3.8-4" stroke="#fff" stroke-width="1.6" fill="none"/></svg><div class="t" style="left:344px;top:740.0px;font-size:13px;line-height:17px;color:#111;">Alex Wilber</div><svg style="left:568px;top:741px" width="13" height="13"><rect x="0.5" y="0.5" width="12" height="12" fill="#fff" stroke="#c6c6c6"/><rect x="1.5" y="1.5" width="10" height="10" fill="none" stroke="#f0f0f0"/><path d="M3.2 6.8l2.3 2.6 4.2-6" stroke="#b0b0b0" stroke-width="1.2" fill="none"/></svg><div class="t" style="left:600px;top:740px;width:252px;overflow:hidden;font-size:13px;line-height:18px;color:#111">Design review</div><svg style="left:1184px;top:741px" width="13" height="13"><rect x="0.5" y="0.5" width="12" height="12" fill="#fff" stroke="#c6c6c6"/><rect x="1.5" y="1.5" width="10" height="10" fill="none" stroke="#f0f0f0"/></svg><div class="t" style="right:582px;top:740.0px;font-size:13px;line-height:17px;color:#111;">9/4/2023 02:00 PM</div><div class="t" style="right:453px;top:740.0px;font-size:13px;line-height:17px;color:#111;">9/4/2023 03:00 PM</div><svg style="left:1492px;top:741px" width="13" height="13"><rect x="0.5" y="0.5" width="12" height="12" fill="#fff" stroke="#c6c6c6"/><rect x="1.5" y="1.5" width="10" height="10" fill="none" stroke="#f0f0f0"/></svg><div class="t" style="right:269px;top:740.0px;font-size:13px;line-height:17px;color:#111;">9/15/2023 08:38 PM</div><svg style="left:1656px;top:734px" width="18" height="24"><path d="M10 10H1V20H12V14.5" fill="none" stroke="#1f7ac4" stroke-width="2"/><path d="M5.3 16.7L13.5 8.5" stroke="#1f7ac4" stroke-width="2"/><path d="M10.5 6.6h5.5v5.5z" fill="#1f7ac4"/></svg><div class="t" style="left:1675px;top:740.0px;font-size:13px;line-height:17px;color:#111;">Open</div><svg style="left:1748px;top:741px" width="13" height="13"><rect x="0.5" y="0.5" width="12" height="12" fill="#fff" stroke="#c6c6c6"/><rect x="1.5" y="1.5" width="10" height="10" fill="none" stroke="#f0f0f0"/></svg><div style="left:241px;top:762px;width:35px;height:27px;background:#c9dbea"></div><div style="left:526px;top:762px;width:23px;height:28px;background:#d3d3d3"></div><div style="left:549px;top:762px;width:49px;height:28px;background:#f0f0f0"></div><div style="left:1165px;top:762px;width:47px;height:28px;background:#f0f0f0"></div><div style="left:1469px;top:762px;width:56px;height:28px;background:#f0f0f0"></div><div style="left:1717px;top:762px;width:72px;height:28px;background:#f0f0f0"></div><div style="left:277px;top:789px;width:1512px;height:1px;background:#ededed"></div><div style="left:296px;top:762px;width:1px;height:28px;background:#ececec"></div><div style="left:316px;top:762px;width:1px;height:28px;background:#ececec"></div><div style="left:1212px;top:762px;width:1px;height:28px;background:#ececec"></div><div style="left:1341px;top:762px;width:1px;height:28px;background:#ececec"></div><div style="left:1525px;top:762px;width:1px;height:28px;background:#ececec"></div><div style="left:1653px;top:762px;width:1px;height:28px;background:#ececec"></div><div class="t" style="right:1647px;top:768.0px;font-size:13px;line-height:17px;color:#111;">2</div><svg style="left:287px;top:775px" width="1" height="1"><circle cx="0" cy="0" r="6.2" fill="none" stroke="#8c8c8c" stroke-width="1.5"/><circle cx="0" cy="0" r="2.9" fill="#999"/></svg><svg style="left:307px;top:775px" width="1" height="1"><rect x="-6" y="-5" width="12" height="3" fill="#1f78c1"/><rect x="-4.3" y="-7.2" width="1.6" height="2.5" fill="#1f78c1"/><rect x="2.7" y="-7.2" width="1.6" height="2.5" fill="#1f78c1"/><rect x="-6" y="-1" width="12" height="8" fill="#1f78c1"/><path d="M-2.8 2.8l1.8 1.8 3.8-4" stroke="#fff" stroke-width="1.6" fill="none"/></svg><div class="t" style="left:344px;top:768.0px;font-size:13px;line-height:17px;color:#111;">Alex Wilber</div><svg style="left:568px;top:769px" width="13" height="13"><rect x="0.5" y="0.5" width="12" height="12" fill="#fff" stroke="#c6c6c6"/><rect x="1.5" y="1.5" width="10" height="10" fill="none" stroke="#f0f0f0"/><path d="M3.2 6.8l2.3 2.6 4.2-6" stroke="#b0b0b0" stroke-width="1.2" fill="none"/></svg><div class="t" style="left:600px;top:768px;width:252px;overflow:hidden;font-size:13px;line-height:18px;color:#111">Digital Offsite</div><svg style="left:1184px;top:769px" width="13" height="13"><rect x="0.5" y="0.5" width="12" height="12" fill="#fff" stroke="#c6c6c6"/><rect x="1.5" y="1.5" width="10" height="10" fill="none" stroke="#f0f0f0"/></svg><div class="t" style="right:582px;top:768.0px;font-size:13px;line-height:17px;color:#111;">9/6/2023 02:00 PM</div><div class="t" style="right:453px;top:768.0px;font-size:13px;line-height:17px;color:#111;">9/6/2023 08:00 PM</div><svg style="left:1492px;top:769px" width="13" height="13"><rect x="0.5" y="0.5" width="12" height="12" fill="#fff" stroke="#c6c6c6"/><rect x="1.5" y="1.5" width="10" height="10" fill="none" stroke="#f0f0f0"/></svg><div class="t" style="right:269px;top:768.0px;font-size:13px;line-height:17px;color:#111;">9/15/2023 08:38 PM</div><svg style="left:1656px;top:762px" width="18" height="24"><path d="M10 10H1V20H12V14.5" fill="none" stroke="#1f7ac4" stroke-width="2"/><path d="M5.3 16.7L13.5 8.5" stroke="#1f7ac4" stroke-width="2"/><path d="M10.5 6.6h5.5v5.5z" fill="#1f7ac4"/></svg><div class="t" style="left:1675px;top:768.0px;font-size:13px;line-height:17px;color:#111;">Open</div><svg style="left:1748px;top:769px" width="13" height="13"><rect x="0.5" y="0.5" width="12" height="12" fill="#fff" stroke="#c6c6c6"/><rect x="1.5" y="1.5" width="10" height="10" fill="none" stroke="#f0f0f0"/></svg><div style="left:241px;top:790px;width:35px;height:27px;background:#c9dbea"></div><div style="left:526px;top:790px;width:23px;height:28px;background:#d3d3d3"></div><div style="left:549px;top:790px;width:49px;height:28px;background:#f0f0f0"></div><div style="left:1165px;top:790px;width:47px;height:28px;background:#f0f0f0"></div><div style="left:1469px;top:790px;width:56px;height:28px;background:#f0f0f0"></div><div style="left:1717px;top:790px;width:72px;height:28px;background:#f0f0f0"></div><div style="left:277px;top:817px;width:1512px;height:1px;background:#ededed"></div><div style="left:296px;top:790px;width:1px;height:28px;background:#ececec"></div><div style="left:316px;top:790px;width:1px;height:28px;background:#ececec"></div><div style="left:1212px;top:790px;width:1px;height:28px;background:#ececec"></div><div style="left:1341px;top:790px;width:1px;height:28px;background:#ececec"></div><div style="left:1525px;top:790px;width:1px;height:28px;background:#ececec"></div><div style="left:1653px;top:790px;width:1px;height:28px;background:#ececec"></div><div class="t" style="right:1647px;top:796.0px;font-size:13px;line-height:17px;color:#111;">2</div><svg style="left:287px;top:803px" width="1" height="1"><circle cx="0" cy="0" r="6.2" fill="none" stroke="#8c8c8c" stroke-width="1.5"/><circle cx="0" cy="0" r="2.9" fill="#999"/></svg><svg style="left:307px;top:803px" width="1" height="1"><rect x="-6" y="-5" width="12" height="3" fill="#1f78c1"/><rect x="-4.3" y="-7.2" width="1.6" height="2.5" fill="#1f78c1"/><rect x="2.7" y="-7.2" width="1.6" height="2.5" fill="#1f78c1"/><rect x="-6" y="-1" width="12" height="8" fill="#1f78c1"/><path d="M-2.8 2.8l1.8 1.8 3.8-4" stroke="#fff" stroke-width="1.6" fill="none"/></svg><div class="t" style="left:344px;top:796.0px;font-size:13px;line-height:17px;color:#111;">Alex Wilber</div><svg style="left:568px;top:797px" width="13" height="13"><rect x="0.5" y="0.5" width="12" height="12" fill="#fff" stroke="#c6c6c6"/><rect x="1.5" y="1.5" width="10" height="10" fill="none" stroke="#f0f0f0"/><path d="M3.2 6.8l2.3 2.6 4.2-6" stroke="#b0b0b0" stroke-width="1.2" fill="none"/></svg><div class="t" style="left:600px;top:796px;width:252px;overflow:hidden;font-size:13px;line-height:18px;color:#111">Design editorial sync</div><svg style="left:1184px;top:797px" width="13" height="13"><rect x="0.5" y="0.5" width="12" height="12" fill="#fff" stroke="#c6c6c6"/><rect x="1.5" y="1.5" width="10" height="10" fill="none" stroke="#f0f0f0"/></svg><div class="t" style="right:582px;top:796.0px;font-size:13px;line-height:17px;color:#111;">9/4/2023 05:30 PM</div><div class="t" style="right:453px;top:796.0px;font-size:13px;line-height:17px;color:#111;">9/4/2023 06:30 PM</div><svg style="left:1492px;top:797px" width="13" height="13"><rect x="0.5" y="0.5" width="12" height="12" fill="#fff" stroke="#c6c6c6"/><rect x="1.5" y="1.5" width="10" height="10" fill="none" stroke="#f0f0f0"/></svg><div class="t" style="right:269px;top:796.0px;font-size:13px;line-height:17px;color:#111;">9/15/2023 08:38 PM</div><svg style="left:1656px;top:790px" width="18" height="24"><path d="M10 10H1V20H12V14.5" fill="none" stroke="#1f7ac4" stroke-width="2"/><path d="M5.3 16.7L13.5 8.5" stroke="#1f7ac4" stroke-width="2"/><path d="M10.5 6.6h5.5v5.5z" fill="#1f7ac4"/></svg><div class="t" style="left:1675px;top:796.0px;font-size:13px;line-height:17px;color:#111;">Open</div><svg style="left:1748px;top:797px" width="13" height="13"><rect x="0.5" y="0.5" width="12" height="12" fill="#fff" stroke="#c6c6c6"/><rect x="1.5" y="1.5" width="10" height="10" fill="none" stroke="#f0f0f0"/></svg><div style="left:241px;top:818px;width:35px;height:27px;background:#c9dbea"></div><div style="left:526px;top:818px;width:23px;height:28px;background:#d3d3d3"></div><div style="left:549px;top:818px;width:49px;height:28px;background:#f0f0f0"></div><div style="left:1165px;top:818px;width:47px;height:28px;background:#f0f0f0"></div><div style="left:1469px;top:818px;width:56px;height:28px;background:#f0f0f0"></div><div style="left:1717px;top:818px;width:72px;height:28px;background:#f0f0f0"></div><div style="left:277px;top:845px;width:1512px;height:1px;background:#ededed"></div><div style="left:296px;top:818px;width:1px;height:28px;background:#ececec"></div><div style="left:316px;top:818px;width:1px;height:28px;background:#ececec"></div><div style="left:1212px;top:818px;width:1px;height:28px;background:#ececec"></div><div style="left:1341px;top:818px;width:1px;height:28px;background:#ececec"></div><div style="left:1525px;top:818px;width:1px;height:28px;background:#ececec"></div><div style="left:1653px;top:818px;width:1px;height:28px;background:#ececec"></div><div class="t" style="right:1647px;top:824.0px;font-size:13px;line-height:17px;color:#111;">2</div><svg style="left:287px;top:831px" width="1" height="1"><circle cx="0" cy="0" r="6.2" fill="none" stroke="#8c8c8c" stroke-width="1.5"/><circle cx="0" cy="0" r="2.9" fill="#999"/></svg><svg style="left:307px;top:831px" width="1" height="1"><rect x="-6" y="-5" width="12" height="3" fill="#1f78c1"/><rect x="-4.3" y="-7.2" width="1.6" height="2.5" fill="#1f78c1"/><rect x="2.7" y="-7.2" width="1.6" height="2.5" fill="#1f78c1"/><rect x="-6" y="-1" width="12" height="8" fill="#1f78c1"/><path d="M-2.8 2.8l1.8 1.8 3.8-4" stroke="#fff" stroke-width="1.6" fill="none"/></svg><div class="t" style="left:344px;top:824.0px;font-size:13px;line-height:17px;color:#111;">Alex Wilber</div><svg style="left:568px;top:825px" width="13" height="13"><rect x="0.5" y="0.5" width="12" height="12" fill="#fff" stroke="#c6c6c6"/><rect x="1.5" y="1.5" width="10" height="10" fill="none" stroke="#f0f0f0"/></svg><div class="t" style="left:600px;top:824px;width:252px;overflow:hidden;font-size:13px;line-height:18px;color:#111">Room meet</div><svg style="left:1184px;top:825px" width="13" height="13"><rect x="0.5" y="0.5" width="12" height="12" fill="#fff" stroke="#c6c6c6"/><rect x="1.5" y="1.5" width="10" height="10" fill="none" stroke="#f0f0f0"/></svg><div class="t" style="right:582px;top:824.0px;font-size:13px;line-height:17px;color:#111;">9/19/2023 10:00 AM</div><div class="t" style="right:453px;top:824.0px;font-size:13px;line-height:17px;color:#111;">9/19/2023 10:30 AM</div><svg style="left:1492px;top:825px" width="13" height="13"><rect x="0.5" y="0.5" width="12" height="12" fill="#fff" stroke="#c6c6c6"/><rect x="1.5" y="1.5" width="10" height="10" fill="none" stroke="#f0f0f0"/></svg><div class="t" style="right:269px;top:824.0px;font-size:13px;line-height:17px;color:#111;">9/18/2023 06:39 PM</div><svg style="left:1656px;top:818px" width="18" height="24"><path d="M10 10H1V20H12V14.5" fill="none" stroke="#1f7ac4" stroke-width="2"/><path d="M5.3 16.7L13.5 8.5" stroke="#1f7ac4" stroke-width="2"/><path d="M10.5 6.6h5.5v5.5z" fill="#1f7ac4"/></svg><div class="t" style="left:1675px;top:824.0px;font-size:13px;line-height:17px;color:#111;">Open</div><svg style="left:1748px;top:825px" width="13" height="13"><rect x="0.5" y="0.5" width="12" height="12" fill="#fff" stroke="#c6c6c6"/><rect x="1.5" y="1.5" width="10" height="10" fill="none" stroke="#f0f0f0"/></svg><div style="left:241px;top:846px;width:35px;height:27px;background:#c9dbea"></div><div style="left:526px;top:846px;width:23px;height:28px;background:#d3d3d3"></div><div style="left:549px;top:846px;width:49px;height:28px;background:#f0f0f0"></div><div style="left:1165px;top:846px;width:47px;height:28px;background:#f0f0f0"></div><div style="left:1469px;top:846px;width:56px;height:28px;background:#f0f0f0"></div><div style="left:1717px;top:846px;width:72px;height:28px;background:#f0f0f0"></div><div style="left:277px;top:873px;width:1512px;height:1px;background:#ededed"></div><div style="left:296px;top:846px;width:1px;height:28px;background:#ececec"></div><div style="left:316px;top:846px;width:1px;height:28px;background:#ececec"></div><div style="left:1212px;top:846px;width:1px;height:28px;background:#ececec"></div><div style="left:1341px;top:846px;width:1px;height:28px;background:#ececec"></div><div style="left:1525px;top:846px;width:1px;height:28px;background:#ececec"></div><div style="left:1653px;top:846px;width:1px;height:28px;background:#ececec"></div><div class="t" style="right:1647px;top:852.0px;font-size:13px;line-height:17px;color:#111;">2</div><svg style="left:287px;top:859px" width="1" height="1"><circle cx="0" cy="0" r="6.2" fill="none" stroke="#8c8c8c" stroke-width="1.5"/><circle cx="0" cy="0" r="2.9" fill="#999"/></svg><svg style="left:307px;top:859px" width="1" height="1"><rect x="-6" y="-5" width="12" height="3" fill="#1f78c1"/><rect x="-4.3" y="-7.2" width="1.6" height="2.5" fill="#1f78c1"/><rect x="2.7" y="-7.2" width="1.6" height="2.5" fill="#1f78c1"/><rect x="-6" y="-1" width="12" height="8" fill="#1f78c1"/><path d="M-2.8 2.8l1.8 1.8 3.8-4" stroke="#fff" stroke-width="1.6" fill="none"/></svg><div class="t" style="left:344px;top:852.0px;font-size:13px;line-height:17px;color:#111;">Alex Wilber</div><svg style="left:568px;top:853px" width="13" height="13"><rect x="0.5" y="0.5" width="12" height="12" fill="#fff" stroke="#c6c6c6"/><rect x="1.5" y="1.5" width="10" height="10" fill="none" stroke="#f0f0f0"/><path d="M3.2 6.8l2.3 2.6 4.2-6" stroke="#b0b0b0" stroke-width="1.2" fill="none"/></svg><div class="t" style="left:600px;top:852px;width:252px;overflow:hidden;font-size:13px;line-height:18px;color:#111">Roundtable brainstorming</div><svg style="left:856px;top:853px" width="17" height="14"><path d="M0 7C2.5 2.3 5.5 1.5 8 1.5S13.5 2.3 16 7C13.5 11.7 10.5 12.5 8 12.5S2.5 11.7 0 7z" fill="#2a7dc2"/><circle cx="8" cy="6.9" r="3.9" fill="none" stroke="#fff" stroke-width="0.9"/><circle cx="6.6" cy="5.5" r="0.9" fill="#fff"/></svg><div class="t" style="left:874px;top:852px;width:290px;overflow:hidden;font-size:13px;line-height:18px;color:#111">All ideas welcome50k-filtered-rows.ytr_rest</div><svg style="left:1184px;top:853px" width="13" height="13"><rect x="0.5" y="0.5" width="12" height="12" fill="#fff" stroke="#c6c6c6"/><rect x="1.5" y="1.5" width="10" height="10" fill="none" stroke="#f0f0f0"/></svg><div class="t" style="right:582px;top:852.0px;font-size:13px;line-height:17px;color:#111;">9/20/2023 10:30 AM</div><div class="t" style="right:453px;top:852.0px;font-size:13px;line-height:17px;color:#111;">9/20/2023 11:30 AM</div><svg style="left:1492px;top:853px" width="13" height="13"><rect x="0.5" y="0.5" width="12" height="12" fill="#fff" stroke="#c6c6c6"/><rect x="1.5" y="1.5" width="10" height="10" fill="none" stroke="#f0f0f0"/></svg><div class="t" style="right:269px;top:852.0px;font-size:13px;line-height:17px;color:#111;">9/18/2023 06:44 PM</div><svg style="left:1656px;top:846px" width="18" height="24"><path d="M10 10H1V20H12V14.5" fill="none" stroke="#1f7ac4" stroke-width="2"/><path d="M5.3 16.7L13.5 8.5" stroke="#1f7ac4" stroke-width="2"/><path d="M10.5 6.6h5.5v5.5z" fill="#1f7ac4"/></svg><div class="t" style="left:1675px;top:852.0px;font-size:13px;line-height:17px;color:#111;">Open</div><svg style="left:1748px;top:853px" width="13" height="13"><rect x="0.5" y="0.5" width="12" height="12" fill="#fff" stroke="#c6c6c6"/><rect x="1.5" y="1.5" width="10" height="10" fill="none" stroke="#f0f0f0"/></svg><div style="left:241px;top:874px;width:35px;height:27px;background:#c9dbea"></div><div style="left:526px;top:874px;width:23px;height:28px;background:#d3d3d3"></div><div style="left:549px;top:874px;width:49px;height:28px;background:#f0f0f0"></div><div style="left:1165px;top:874px;width:47px;height:28px;background:#f0f0f0"></div><div style="left:1469px;top:874px;width:56px;height:28px;background:#f0f0f0"></div><div style="left:1717px;top:874px;width:72px;height:28px;background:#f0f0f0"></div><div style="left:277px;top:901px;width:1512px;height:1px;background:#ededed"></div><div style="left:296px;top:874px;width:1px;height:28px;background:#ececec"></div><div style="left:316px;top:874px;width:1px;height:28px;background:#ececec"></div><div style="left:1212px;top:874px;width:1px;height:28px;background:#ececec"></div><div style="left:1341px;top:874px;width:1px;height:28px;background:#ececec"></div><div style="left:1525px;top:874px;width:1px;height:28px;background:#ececec"></div><div style="left:1653px;top:874px;width:1px;height:28px;background:#ececec"></div><div class="t" style="right:1647px;top:880.0px;font-size:13px;line-height:17px;color:#111;">2</div><svg style="left:287px;top:887px" width="1" height="1"><circle cx="0" cy="0" r="6.2" fill="none" stroke="#8c8c8c" stroke-width="1.5"/><circle cx="0" cy="0" r="2.9" fill="#999"/></svg><svg style="left:307px;top:887px" width="1" height="1"><rect x="-6" y="-5" width="12" height="3" fill="#1f78c1"/><rect x="-4.3" y="-7.2" width="1.6" height="2.5" fill="#1f78c1"/><rect x="2.7" y="-7.2" width="1.6" height="2.5" fill="#1f78c1"/><rect x="-6" y="-1" width="12" height="8" fill="#1f78c1"/><path d="M-2.8 2.8l1.8 1.8 3.8-4" stroke="#fff" stroke-width="1.6" fill="none"/></svg><div class="t" style="left:344px;top:880.0px;font-size:13px;line-height:17px;color:#111;">Alex Wilber</div><svg style="left:568px;top:881px" width="13" height="13"><rect x="0.5" y="0.5" width="12" height="12" fill="#fff" stroke="#c6c6c6"/><rect x="1.5" y="1.5" width="10" height="10" fill="none" stroke="#f0f0f0"/></svg><div class="t" style="left:600px;top:880px;width:252px;overflow:hidden;font-size:13px;line-height:18px;color:#111">Project ABC introduction</div><svg style="left:856px;top:881px" width="17" height="14"><path d="M0 7C2.5 2.3 5.5 1.5 8 1.5S13.5 2.3 16 7C13.5 11.7 10.5 12.5 8 12.5S2.5 11.7 0 7z" fill="#2a7dc2"/><circle cx="8" cy="6.9" r="3.9" fill="none" stroke="#fff" stroke-width="0.9"/><circle cx="6.6" cy="5.5" r="0.9" fill="#fff"/></svg><div class="t" style="left:874px;top:880px;width:290px;overflow:hidden;font-size:13px;line-height:18px;color:#111">A screenshot to look at. ______________________</div><svg style="left:1184px;top:881px" width="13" height="13"><rect x="0.5" y="0.5" width="12" height="12" fill="#fff" stroke="#c6c6c6"/><rect x="1.5" y="1.5" width="10" height="10" fill="none" stroke="#f0f0f0"/></svg><div class="t" style="right:582px;top:880.0px;font-size:13px;line-height:17px;color:#111;">5/23/2024 02:00 PM</div><div class="t" style="right:453px;top:880.0px;font-size:13px;line-height:17px;color:#111;">5/23/2024 03:00 PM</div><svg style="left:1492px;top:881px" width="13" height="13"><rect x="0.5" y="0.5" width="12" height="12" fill="#fff" stroke="#c6c6c6"/><rect x="1.5" y="1.5" width="10" height="10" fill="none" stroke="#f0f0f0"/><path d="M3.2 6.8l2.3 2.6 4.2-6" stroke="#b0b0b0" stroke-width="1.2" fill="none"/></svg><div class="t" style="right:269px;top:880.0px;font-size:13px;line-height:17px;color:#111;">5/22/2024 04:18 PM</div><svg style="left:1656px;top:874px" width="18" height="24"><path d="M10 10H1V20H12V14.5" fill="none" stroke="#1f7ac4" stroke-width="2"/><path d="M5.3 16.7L13.5 8.5" stroke="#1f7ac4" stroke-width="2"/><path d="M10.5 6.6h5.5v5.5z" fill="#1f7ac4"/></svg><div class="t" style="left:1675px;top:880.0px;font-size:13px;line-height:17px;color:#111;">Open</div><svg style="left:1748px;top:881px" width="13" height="13"><rect x="0.5" y="0.5" width="12" height="12" fill="#fff" stroke="#c6c6c6"/><rect x="1.5" y="1.5" width="10" height="10" fill="none" stroke="#f0f0f0"/></svg><div style="left:241px;top:902px;width:35px;height:27px;background:#c9dbea"></div><div style="left:526px;top:902px;width:23px;height:28px;background:#d3d3d3"></div><div style="left:549px;top:902px;width:49px;height:28px;background:#f0f0f0"></div><div style="left:1165px;top:902px;width:47px;height:28px;background:#f0f0f0"></div><div style="left:1469px;top:902px;width:56px;height:28px;background:#f0f0f0"></div><div style="left:1717px;top:902px;width:72px;height:28px;background:#f0f0f0"></div><div style="left:277px;top:929px;width:1512px;height:1px;background:#ededed"></div><div style="left:296px;top:902px;width:1px;height:28px;background:#ececec"></div><div style="left:316px;top:902px;width:1px;height:28px;background:#ececec"></div><div style="left:1212px;top:902px;width:1px;height:28px;background:#ececec"></div><div style="left:1341px;top:902px;width:1px;height:28px;background:#ececec"></div><div style="left:1525px;top:902px;width:1px;height:28px;background:#ececec"></div><div style="left:1653px;top:902px;width:1px;height:28px;background:#ececec"></div><div class="t" style="right:1647px;top:908.0px;font-size:13px;line-height:17px;color:#111;">2</div><svg style="left:287px;top:915px" width="1" height="1"><circle cx="0" cy="0" r="6.2" fill="none" stroke="#8c8c8c" stroke-width="1.5"/><circle cx="0" cy="0" r="2.9" fill="#999"/></svg><svg style="left:307px;top:915px" width="1" height="1"><rect x="-6" y="-5" width="12" height="3" fill="#1f78c1"/><rect x="-4.3" y="-7.2" width="1.6" height="2.5" fill="#1f78c1"/><rect x="2.7" y="-7.2" width="1.6" height="2.5" fill="#1f78c1"/><rect x="-6" y="-1" width="12" height="8" fill="#1f78c1"/><path d="M-2.8 2.8l1.8 1.8 3.8-4" stroke="#fff" stroke-width="1.6" fill="none"/></svg><div class="t" style="left:344px;top:908.0px;font-size:13px;line-height:17px;color:#111;">Alex Wilber</div><svg style="left:568px;top:909px" width="13" height="13"><rect x="0.5" y="0.5" width="12" height="12" fill="#fff" stroke="#c6c6c6"/><rect x="1.5" y="1.5" width="10" height="10" fill="none" stroke="#f0f0f0"/></svg><div class="t" style="left:600px;top:908px;width:252px;overflow:hidden;font-size:13px;line-height:18px;color:#111">Project ABC - phase 1</div><svg style="left:856px;top:909px" width="17" height="14"><path d="M0 7C2.5 2.3 5.5 1.5 8 1.5S13.5 2.3 16 7C13.5 11.7 10.5 12.5 8 12.5S2.5 11.7 0 7z" fill="#2a7dc2"/><circle cx="8" cy="6.9" r="3.9" fill="none" stroke="#fff" stroke-width="0.9"/><circle cx="6.6" cy="5.5" r="0.9" fill="#fff"/></svg><div class="t" style="left:874px;top:908px;width:290px;overflow:hidden;font-size:13px;line-height:18px;color:#111">sapio365 is the M365 admin&#x27;s best friend! ☺ _____</div><svg style="left:1184px;top:909px" width="13" height="13"><rect x="0.5" y="0.5" width="12" height="12" fill="#fff" stroke="#c6c6c6"/><rect x="1.5" y="1.5" width="10" height="10" fill="none" stroke="#f0f0f0"/></svg><div class="t" style="right:582px;top:908.0px;font-size:13px;line-height:17px;color:#111;">5/28/2024 11:30 AM</div><div class="t" style="right:453px;top:908.0px;font-size:13px;line-height:17px;color:#111;">5/28/2024 12:30 PM</div><svg style="left:1492px;top:909px" width="13" height="13"><rect x="0.5" y="0.5" width="12" height="12" fill="#fff" stroke="#c6c6c6"/><rect x="1.5" y="1.5" width="10" height="10" fill="none" stroke="#f0f0f0"/><path d="M3.2 6.8l2.3 2.6 4.2-6" stroke="#b0b0b0" stroke-width="1.2" fill="none"/></svg><div class="t" style="right:269px;top:908.0px;font-size:13px;line-height:17px;color:#111;">5/22/2024 04:20 PM</div><svg style="left:1656px;top:902px" width="18" height="24"><path d="M10 10H1V20H12V14.5" fill="none" stroke="#1f7ac4" stroke-width="2"/><path d="M5.3 16.7L13.5 8.5" stroke="#1f7ac4" stroke-width="2"/><path d="M10.5 6.6h5.5v5.5z" fill="#1f7ac4"/></svg><div class="t" style="left:1675px;top:908.0px;font-size:13px;line-height:17px;color:#111;">Open</div><svg style="left:1748px;top:909px" width="13" height="13"><rect x="0.5" y="0.5" width="12" height="12" fill="#fff" stroke="#c6c6c6"/><rect x="1.5" y="1.5" width="10" height="10" fill="none" stroke="#f0f0f0"/><path d="M3.2 6.8l2.3 2.6 4.2-6" stroke="#b0b0b0" stroke-width="1.2" fill="none"/></svg><div style="left:241px;top:930px;width:1548px;height:27px;background:#0a74d9"></div><div style="left:241px;top:930px;width:35px;height:27px;background:#66a6e0"></div><div style="left:526px;top:930px;width:23px;height:27px;background:#67a3da"></div><div style="left:549px;top:930px;width:49px;height:27px;background:#7ab4e7"></div><div style="left:1165px;top:930px;width:47px;height:27px;background:#7ab4e7"></div><div style="left:1469px;top:930px;width:56px;height:27px;background:#7ab4e7"></div><div style="left:1717px;top:930px;width:72px;height:27px;background:#7ab4e7"></div><div style="left:277px;top:957px;width:1512px;height:1px;background:#ededed"></div><div style="left:276px;top:930px;width:1px;height:27px;background:#e9eef3"></div><div style="left:296px;top:930px;width:1px;height:27px;background:#e9eef3"></div><div style="left:316px;top:930px;width:1px;height:27px;background:#e9eef3"></div><div style="left:525px;top:930px;width:1px;height:27px;background:#e9eef3"></div><div style="left:549px;top:930px;width:1px;height:27px;background:#e9eef3"></div><div style="left:1165px;top:930px;width:1px;height:27px;background:#e9eef3"></div><div style="left:1213px;top:930px;width:1px;height:27px;background:#e9eef3"></div><div style="left:1341px;top:930px;width:1px;height:27px;background:#e9eef3"></div><div style="left:1469px;top:930px;width:1px;height:27px;background:#e9eef3"></div><div style="left:1525px;top:930px;width:1px;height:27px;background:#e9eef3"></div><div style="left:1653px;top:930px;width:1px;height:27px;background:#e9eef3"></div><div style="left:1717px;top:930px;width:1px;height:27px;background:#e9eef3"></div><div class="t" style="right:1647px;top:936.0px;font-size:13px;line-height:17px;color:#fff;">2</div><svg style="left:287px;top:943px" width="1" height="1"><rect x="-8" y="-8" width="16" height="16" fill="#fff"/><circle cx="0" cy="0" r="6.2" fill="none" stroke="#8c8c8c" stroke-width="1.5"/><circle cx="0" cy="0" r="2.9" fill="#999"/></svg><svg style="left:307px;top:943px" width="1" height="1"><path d="M-6.5 -4.5h13v12h-13z" fill="#2a7dc2" stroke="#fff" stroke-width="1"/><path d="M-6.5 -1.5h13" stroke="#fff" stroke-width="1"/><path d="M-4.8 -7.5h2.4v3h-2.4zM2.4 -7.5h2.4v3h-2.4z" fill="#2a7dc2" stroke="#fff" stroke-width="1"/><path d="M-2.8 2.8l1.8 1.8 3.8-4" stroke="#fff" stroke-width="1.6" fill="none"/></svg><div class="t" style="left:344px;top:936.0px;font-size:13px;line-height:17px;color:#fff;">Alex Wilber</div><svg style="left:568px;top:937px" width="13" height="13"><rect x="0.5" y="0.5" width="12" height="12" fill="#fff" stroke="#bcbcbc"/><rect x="1.5" y="1.5" width="10" height="10" fill="none" stroke="#f0f0f0"/></svg><div class="t" style="left:600px;top:936px;width:252px;overflow:hidden;font-size:13px;line-height:18px;color:#fff">Project ABC: phase 2</div><svg style="left:856px;top:937px" width="17" height="14"><rect x="-0.5" y="0" width="17.5" height="14" fill="#fff"/><path d="M0 7C2.5 2.3 5.5 1.5 8 1.5S13.5 2.3 16 7C13.5 11.7 10.5 12.5 8 12.5S2.5 11.7 0 7z" fill="#2a7dc2"/><circle cx="8" cy="6.9" r="3.9" fill="none" stroke="#fff" stroke-width="0.9"/><circle cx="6.6" cy="5.5" r="0.9" fill="#fff"/></svg><div class="t" style="left:874px;top:936px;width:290px;overflow:hidden;font-size:13px;line-height:18px;color:#fff">see-user-activity-logs.webp options-grid-tools-user</div><svg style="left:1184px;top:937px" width="13" height="13"><rect x="0.5" y="0.5" width="12" height="12" fill="#fff" stroke="#bcbcbc"/><rect x="1.5" y="1.5" width="10" height="10" fill="none" stroke="#f0f0f0"/></svg><div class="t" style="right:582px;top:936.0px;font-size:13px;line-height:17px;color:#fff;">5/30/2024 02:00 PM</div><div class="t" style="right:453px;top:936.0px;font-size:13px;line-height:17px;color:#fff;">5/30/2024 02:30 PM</div><svg style="left:1492px;top:937px" width="13" height="13"><rect x="0.5" y="0.5" width="12" height="12" fill="#fff" stroke="#bcbcbc"/><rect x="1.5" y="1.5" width="10" height="10" fill="none" stroke="#f0f0f0"/><path d="M3.2 6.8l2.3 2.6 4.2-6" stroke="#b0b0b0" stroke-width="1.2" fill="none"/></svg><div class="t" style="right:269px;top:936.0px;font-size:13px;line-height:17px;color:#fff;">5/22/2024 04:23 PM</div><svg style="left:1656px;top:930px" width="18" height="24"><rect x="0" y="5" width="16" height="16" fill="#fff"/><path d="M10 10H1V20H12V14.5" fill="none" stroke="#1f7ac4" stroke-width="2"/><path d="M5.3 16.7L13.5 8.5" stroke="#1f7ac4" stroke-width="2"/><path d="M10.5 6.6h5.5v5.5z" fill="#1f7ac4"/></svg><div class="t" style="left:1675px;top:936.0px;font-size:13px;line-height:17px;color:#111;">Open</div><svg style="left:1748px;top:937px" width="13" height="13"><rect x="0.5" y="0.5" width="12" height="12" fill="#fff" stroke="#bcbcbc"/><rect x="1.5" y="1.5" width="10" height="10" fill="none" stroke="#f0f0f0"/></svg><div style="left:241px;top:958px;width:35px;height:27px;background:#c9dbea"></div><div style="left:526px;top:958px;width:23px;height:28px;background:#d3d3d3"></div><div style="left:549px;top:958px;width:49px;height:28px;background:#f0f0f0"></div><div style="left:1165px;top:958px;width:47px;height:28px;background:#f0f0f0"></div><div style="left:1469px;top:958px;width:56px;height:28px;background:#f0f0f0"></div><div style="left:1717px;top:958px;width:72px;height:28px;background:#f0f0f0"></div><div style="left:277px;top:985px;width:1512px;height:1px;background:#ededed"></div><div style="left:296px;top:958px;width:1px;height:28px;background:#ececec"></div><div style="left:316px;top:958px;width:1px;height:28px;background:#ececec"></div><div style="left:1212px;top:958px;width:1px;height:28px;background:#ececec"></div><div style="left:1341px;top:958px;width:1px;height:28px;background:#ececec"></div><div style="left:1525px;top:958px;width:1px;height:28px;background:#ececec"></div><div style="left:1653px;top:958px;width:1px;height:28px;background:#ececec"></div><div class="t" style="right:1647px;top:964.0px;font-size:13px;line-height:17px;color:#111;">2</div><svg style="left:287px;top:971px" width="1" height="1"><circle cx="0" cy="0" r="6.2" fill="none" stroke="#8c8c8c" stroke-width="1.5"/><circle cx="0" cy="0" r="2.9" fill="#999"/></svg><svg style="left:307px;top:971px" width="1" height="1"><rect x="-6" y="-5" width="12" height="3" fill="#1f78c1"/><rect x="-4.3" y="-7.2" width="1.6" height="2.5" fill="#1f78c1"/><rect x="2.7" y="-7.2" width="1.6" height="2.5" fill="#1f78c1"/><rect x="-6" y="-1" width="12" height="8" fill="#1f78c1"/><path d="M-2.8 2.8l1.8 1.8 3.8-4" stroke="#fff" stroke-width="1.6" fill="none"/></svg><div class="t" style="left:344px;top:964.0px;font-size:13px;line-height:17px;color:#111;">Alex Wilber</div><svg style="left:568px;top:965px" width="13" height="13"><rect x="0.5" y="0.5" width="12" height="12" fill="#fff" stroke="#c6c6c6"/><rect x="1.5" y="1.5" width="10" height="10" fill="none" stroke="#f0f0f0"/></svg><div class="t" style="left:600px;top:964px;width:252px;overflow:hidden;font-size:13px;line-height:18px;color:#111">Review project DEF</div><svg style="left:1184px;top:965px" width="13" height="13"><rect x="0.5" y="0.5" width="12" height="12" fill="#fff" stroke="#c6c6c6"/><rect x="1.5" y="1.5" width="10" height="10" fill="none" stroke="#f0f0f0"/></svg><div class="t" style="right:582px;top:964.0px;font-size:13px;line-height:17px;color:#111;">5/23/2024 01:00 PM</div><div class="t" style="right:453px;top:964.0px;font-size:13px;line-height:17px;color:#111;">5/23/2024 02:00 PM</div><svg style="left:1492px;top:965px" width="13" height="13"><rect x="0.5" y="0.5" width="12" height="12" fill="#fff" stroke="#c6c6c6"/><rect x="1.5" y="1.5" width="10" height="10" fill="none" stroke="#f0f0f0"/></svg><div class="t" style="right:269px;top:964.0px;font-size:13px;line-height:17px;color:#111;">5/22/2024 05:57 PM</div><svg style="left:1656px;top:958px" width="18" height="24"><path d="M10 10H1V20H12V14.5" fill="none" stroke="#1f7ac4" stroke-width="2"/><path d="M5.3 16.7L13.5 8.5" stroke="#1f7ac4" stroke-width="2"/><path d="M10.5 6.6h5.5v5.5z" fill="#1f7ac4"/></svg><div class="t" style="left:1675px;top:964.0px;font-size:13px;line-height:17px;color:#111;">Open</div><svg style="left:1748px;top:965px" width="13" height="13"><rect x="0.5" y="0.5" width="12" height="12" fill="#fff" stroke="#c6c6c6"/><rect x="1.5" y="1.5" width="10" height="10" fill="none" stroke="#f0f0f0"/><path d="M3.2 6.8l2.3 2.6 4.2-6" stroke="#b0b0b0" stroke-width="1.2" fill="none"/></svg><div style="left:341px;top:230px;width:1px;height:756px;background:#3d4858"></div><div style="left:598px;top:230px;width:1px;height:756px;background:#1576d6"></div><div style="left:852px;top:230px;width:1px;height:756px;background:#1576d6"></div><div style="left:0px;top:1037px;width:1918px;height:20px;background:linear-gradient(#fdfdfd,#f2f2f2)"></div><div class="t" style="left:7px;top:1038.5px;font-size:12.9px;line-height:17px;color:#111;">Rows Loaded: 27 | Rows Displayed: 27 | Rows Selected: 2 | Hierarchy view with 2 top row(s)</div><div style="left:0px;top:1057px;width:1918px;height:20px;background:#7a51c0"></div><div class="t" style="left:5px;top:1059.5px;font-size:12px;line-height:16px;color:#fff;">Ready</div><div class="t" style="left:1815.5px;top:1060.0px;font-size:11.2px;line-height:15px;color:#b9a4e0;">CAP</div><div class="t" style="left:1848px;top:1060.0px;font-size:11.2px;line-height:15px;color:#fff;">NUM</div><div class="t" style="left:1886px;top:1060.0px;font-size:11.2px;line-height:15px;color:#b9a4e0;">SCRL</div><div style="left:0px;top:1078px;width:1920px;height:2px;background:#3a3a3a"></div><div style="left:48px;top:1078px;width:288px;height:2px;background:#dcdcdc"></div><div style="left:584px;top:1078px;width:44px;height:2px;background:#8a8a8a"></div><div style="left:1918px;top:0px;width:2px;height:1077px;background:#fff"></div><div style="left:1867px;top:184px;width:43px;height:853px;background:#7a51c0"></div><div style="left:1867px;top:184px;width:43px;height:47px;background:#5230a0"></div><svg style="left:0;top:0" width="1920" height="1080"><g transform="translate(0 0)"><circle cx="16" cy="13" r="7.4" fill="none" stroke="#8e55b0" stroke-width="1.2"/><ellipse cx="13.7" cy="9.4" rx="1.9" ry="1" fill="#8e55b0"/><ellipse cx="18.3" cy="9.4" rx="1.9" ry="1" fill="#8e55b0"/><path d="M10.6 11.9h4.4q0 4.2-2.1 5.9q-2-1.7-2.3-5.9z" fill="#8e55b0"/><path d="M21.4 11.9h-4.4q0 4.2 2.1 5.9q2-1.7 2.3-5.9z" fill="#8e55b0"/><path d="M14.3 18.8l1.7-3.6 1.7 3.6z" fill="#8e55b0"/></g><rect x="36.5" y="6.5" width="5" height="11" fill="#c9dcef" stroke="#7fa6d0" stroke-width="0.9"/><rect x="41.5" y="10.5" width="6" height="11" fill="#7aa5d3" stroke="#2f6fb3" stroke-width="0.9"/><path d="M56.5 11h7M57 13h6l-3 3.5z" stroke="#333" stroke-width="1" fill="#333"/><defs><clipPath id="tb"><rect x="1380" y="3" width="540" height="51"/></clipPath></defs><g clip-path="url(#tb)"><g fill="none" stroke="#e6e6e6" stroke-width="3"><path d="M1429 17.6H1600M1606 17.6h20l37 36.4"/><circle cx="1425.7" cy="17.6" r="3.3"/><circle cx="1603" cy="17.6" r="3.3"/><path d="M1495 35.5H1590l27 18.5"/><circle cx="1492" cy="35.5" r="3.3"/><path d="M1530 54q6-7.5 14-7.5H1628M1635 46.5h9q6 0 11 7.5"/><circle cx="1631.6" cy="46.5" r="3.3"/></g><g fill="none" stroke="#e6e6e6" stroke-width="5"><circle cx="1699.3" cy="20" r="26.5"/><circle cx="1444.7" cy="41.5" r="16.5"/></g><g fill="none" stroke="#e6e6e6" stroke-width="3"><path d="M1790 54l22-27H1912M1852 54l46-51M1868 54l46-51"/></g><path d="M1687 33l20-20M1693 11h16v16" fill="none" stroke="#e6e6e6" stroke-width="6"/><path d="M1456 53l-17-17M1437 48v-14h14" fill="none" stroke="#e6e6e6" stroke-width="5"/></g><path d="M1841 18h9" stroke="#a8a8a8" stroke-width="1.2"/><rect x="1871.5" y="15.5" width="6" height="6" fill="none" stroke="#a8a8a8" stroke-width="1.1"/><path d="M1873.5 15.5v-2h6v6h-2" fill="none" stroke="#a8a8a8" stroke-width="1.1"/><path d="M1899 12l9 9M1908 12l-9 9" stroke="#a0a0a0" stroke-width="1.3"/><path d="M1879.5 44l3.5-3.5 3.5 3.5" fill="none" stroke="#333" stroke-width="1.6"/><circle cx="1906" cy="41.5" r="8" fill="#2a6bb5"/><text x="1906" y="46.5" font-size="13" font-weight="bold" fill="#fff" text-anchor="middle" font-family="Liberation Sans">?</text><path d="M747 42.5l2.5 3 5-6" fill="none" stroke="#333" stroke-width="1.6"/><path d="M37.5 76.7H25M30 70.5l-6.2 6.2 6.2 6.2" fill="none" stroke="#555a5e" stroke-width="3.6"/><path d="M70.5 76.7H83M78 70.5l6.2 6.2-6.2 6.2" fill="none" stroke="#999" stroke-width="3.6"/><rect x="122.5" y="63" width="27" height="6" fill="#2f6fb3"/><path d="M122.5 69v20.5h20M149 69v13M129.5 69v20.5M135.5 69v20.5M141.4 69v14" fill="none" stroke="#666" stroke-width="1.1"/><circle cx="144.5" cy="85.2" r="6" fill="#f5f5f5" stroke="#555" stroke-width="1.1"/><path d="M148 81.5l-3 5-1.5-1.5z" fill="#2f6fb3"/><path d="M141 89l3-5 1.5 1.5z" fill="#e0502a"/><path d="M179 70v-5q0-1 1-1h6M200 64h6q1 0 1 1v5M179 81v5q0 1 1 1h6" fill="none" stroke="#555a5e" stroke-width="1.8"/><circle cx="192.8" cy="75.7" r="6" fill="none" stroke="#555a5e" stroke-width="1.8"/><circle cx="202.1" cy="85.9" r="7" fill="#45a078"/><path d="M202.1 81.5v8.8M197.7 85.9h8.8" stroke="#fff" stroke-width="2"/><path d="M235 64h20l5 5v20h-25z" fill="#555a5e"/><rect x="241" y="65" width="11" height="7" rx="1" fill="#fff"/><rect x="248" y="66" width="2" height="4" fill="#555a5e"/><rect x="238.5" y="78" width="19" height="9" fill="#fff"/><circle cx="257" cy="86" r="7" fill="#45a078"/><path d="M257 81.6v8.8M252.6 86h8.8" stroke="#fff" stroke-width="2"/><path d="M316.5 75.5A13.2 13.2 0 1 1 311 65.8" fill="none" stroke="#45a078" stroke-width="3.5"/><path d="M315.5 61.5l3.5 3.5v10h-10l-3-3.5h9v-10z" fill="#45a078"/><path d="M350 90A12 12 0 1 1 355 65.5" fill="none" stroke="#45a078" stroke-width="3.3"/><path d="M352 73h9v-9.5h-2.5v7h-6.5z" fill="#45a078"/><path d="M352 73h9v-9.5z" fill="#45a078"/><circle cx="357.2" cy="81" r="3.7" fill="#3470b3"/><path d="M350.5 92q0-6.5 6.7-6.5t6.7 6.5z" fill="#3470b3"/><path d="M385.5 82.5v-18h16M388.5 85.5v-18h16" fill="none" stroke="#aaa" stroke-width="1"/><rect x="391.5" y="70" width="16.5" height="19" fill="#fff" stroke="#45a078" stroke-width="1.1"/><path d="M399.8 73v11" stroke="#45a078" stroke-width="2"/><path d="M394.5 78.5l5.3 6 5.3-6" fill="none" stroke="#45a078" stroke-width="2.2"/><circle cx="453" cy="77" r="14" fill="#b3b3b3"/><path d="M443.5 77.5l6 6 11-11" fill="none" stroke="#fff" stroke-width="3.3"/><circle cx="499" cy="77" r="14" fill="#b3b3b3"/><path d="M489.5 77.5l6 6 11-11" fill="none" stroke="#fff" stroke-width="3.3"/><circle cx="507.5" cy="81.5" r="4.8" fill="#fff"/><circle cx="507.5" cy="81.5" r="3.3" fill="#999"/><path d="M500.5 92q0-6.5 7-6.5t7 6.5z" fill="#999" stroke="#fff" stroke-width="1"/><path d="M541 86V70l5 5q4-6 11-6q14 0 13 17h-4.5q1-11-8.5-11q-5 0-8 3.5l4 4z" fill="#aaa"/><path d="M587 86V70l5 5q4-6 11-6q14 0 13 17h-4.5q1-11-8.5-11q-5 0-8 3.5l4 4z" fill="#aaa"/><rect x="606.5" y="81" width="11.5" height="11.5" fill="#fff" stroke="#999" stroke-width="1"/><path d="M608.5 86.5l2.5 3 5-5.5" fill="none" stroke="#aaa" stroke-width="1.2"/><path d="M646.5 71.5l15-9.5 15 9.5V91.5h-30z" fill="#fff" stroke="#666" stroke-width="1.1"/><path d="M650 65h23v13l-11.5 7.5L650 78z" fill="#e8ae4e"/><path d="M653 68h17M653 71h17M654 74h15M656 77h11" stroke="#fff" stroke-width="1"/><path d="M646.5 91.5l11-10.5M676.5 91.5l-11-10.5M646.5 71.5l15 10 15-10" fill="none" stroke="#666" stroke-width="1.1"/><path d="M700 93l2.5-6.5 24.5-24.5q2-1.8 4 0t0 4l-24.5 24.5z" fill="#2f6fb3"/><path d="M703 86l4 4" stroke="#eee7f6" stroke-width="1.2"/><rect x="746" y="64" width="27" height="4" fill="#3c7bc0"/><rect x="756.5" y="61" width="6" height="4" rx="2" fill="#3c7bc0"/><rect x="748" y="69" width="23" height="24" fill="#6d6d6d"/><rect x="752" y="73" width="3" height="16" fill="#fff"/><rect x="758" y="73" width="3" height="16" fill="#fff"/><rect x="764" y="73" width="3" height="16" fill="#fff"/><g transform="translate(840.5 76) rotate(45) scale(1.08) translate(-5.5 -15)"><path d="M11 24V5.5A5.5 5.5 0 0 0 0 5.5V26A4 4 0 0 0 8 26V12A2.5 2.5 0 0 0 3 12V20" fill="none" stroke="#2f6fb3" stroke-width="1.9" stroke-linecap="round"/></g><path d="M911.5 62.5h19l5 5v24h-24z" fill="#fff" stroke="#aaa" stroke-width="1.1"/><path d="M930.5 62.5v5h5" fill="none" stroke="#aaa" stroke-width="1.1"/><g transform="translate(922.5 78.5) rotate(45) scale(0.6) translate(-5.5 -15)"><path d="M11 24V5.5A5.5 5.5 0 0 0 0 5.5V26A4 4 0 0 0 8 26V12A2.5 2.5 0 0 0 3 12V20" fill="none" stroke="#aaa" stroke-width="2.6" stroke-linecap="round"/></g><path d="M925 88q4-5 8-5t8 5q-4 5-8 5t-8-5z" fill="#aaa" stroke="#fff" stroke-width="1"/><circle cx="933" cy="88" r="2.2" fill="#fff"/><circle cx="933" cy="88" r="1.1" fill="#aaa"/><g transform="translate(1003.5 76) rotate(45) scale(1.08) translate(-5.5 -15)"><path d="M11 24V5.5A5.5 5.5 0 0 0 0 5.5V26A4 4 0 0 0 8 26V12A2.5 2.5 0 0 0 3 12V20" fill="none" stroke="#aaa" stroke-width="2.1" stroke-linecap="round"/></g><path d="M1008 76h8v9h4l-8 8-8-8h4z" fill="#b5b5b5" stroke="#fff" stroke-width="1"/><g transform="translate(1067 76) rotate(45) scale(1.08) translate(-5.5 -15)"><path d="M11 24V5.5A5.5 5.5 0 0 0 0 5.5V26A4 4 0 0 0 8 26V12A2.5 2.5 0 0 0 3 12V20" fill="none" stroke="#aaa" stroke-width="2.1" stroke-linecap="round"/></g><path d="M1068.5 75.5h9.5l5 5v12.5h-14.5z" fill="#fff" stroke="#aaa" stroke-width="1.1"/><path d="M1078 75.5v5h5" fill="none" stroke="#aaa" stroke-width="1"/><g transform="translate(1127 76) rotate(45) scale(1.08) translate(-5.5 -15)"><path d="M11 24V5.5A5.5 5.5 0 0 0 0 5.5V26A4 4 0 0 0 8 26V12A2.5 2.5 0 0 0 3 12V20" fill="none" stroke="#aaa" stroke-width="2.1" stroke-linecap="round"/></g><circle cx="1135" cy="86" r="7.5" fill="#aaa" stroke="#fff" stroke-width="1"/><path d="M1132 83l6 6M1138 83l-6 6" stroke="#fff" stroke-width="1.8"/><circle cx="1201" cy="69" r="7" fill="#2f6fb3"/><path d="M1189 91q0-14 12-14t12 14z" fill="#2f6fb3"/><circle cx="1211" cy="84.7" r="7.5" fill="#8b4ea8" stroke="#fff" stroke-width="1"/><rect x="1210" y="83" width="2.2" height="6" fill="#fff"/><circle cx="1211.1" cy="80.5" r="1.2" fill="#fff"/><circle cx="1284.2" cy="68.8" r="5.5" fill="#2f6fb3"/><path d="M1275 85q0-11 9.5-11t9.5 11z" fill="#2f6fb3"/><circle cx="1272.1" cy="73.4" r="5.5" fill="#2f6fb3" stroke="#fff" stroke-width="0.8"/><path d="M1263 89q0-11 9.5-11t9.5 11z" fill="#2f6fb3" stroke="#fff" stroke-width="0.8"/><rect x="1337.5" y="64.5" width="31" height="23" fill="#fff" stroke="#2f6fb3" stroke-width="1.1"/><rect x="1337.5" y="64" width="31" height="5" fill="#2f6fb3"/><rect x="1341.5" y="71" width="8.5" height="7.5" rx="2.2" fill="#e6a43d"/><path d="M1344.3 78v7.5l1.6 1.6 1.6-1.6v-1.2h-1.2v-1.1h1.2v-1.1h-1.2v-4.1z" fill="#e6a43d"/><rect x="1344.6" y="72.6" width="2.3" height="1.8" fill="#fff"/><path d="M1354 75.5h10M1354 78.5h10M1354 81.5h10" stroke="#aaa" stroke-width="0.9"/><rect x="1424.5" y="65.5" width="28" height="26" fill="#fff" stroke="#a6a6a6" stroke-width="1.2"/><rect x="1424.5" y="65" width="28" height="4.5" fill="#a6a6a6"/><path d="M1431 62v5M1446 62v5" stroke="#a6a6a6" stroke-width="1.5"/><path d="M1428.5 72.5h20v15h-20zM1428.5 76.5h20M1428.5 80h20M1428.5 84h20M1433.5 72.5v15M1438.5 72.5v15M1443.5 72.5v15" fill="none" stroke="#a9a9a9" stroke-width="1"/><rect x="15" y="158" width="15" height="3.5" fill="#2f6fb3"/><rect x="19" y="164" width="12" height="2.5" fill="#2f6fb3"/><rect x="19" y="168" width="12" height="2.5" fill="#2f6fb3"/><rect x="19" y="172" width="12" height="2.5" fill="#2f6fb3"/><path d="M16.5 161.5v13M16.5 165.5h2M16.5 169.5h2M16.5 173.5h2" stroke="#444" stroke-width="1"/><circle cx="16.5" cy="165.5" r="1.3" fill="#c8d8e6" stroke="#444" stroke-width="0.8"/><circle cx="16.5" cy="169.5" r="1.3" fill="#c8d8e6" stroke="#444" stroke-width="0.8"/><circle cx="16.5" cy="173.5" r="1.3" fill="#c8d8e6" stroke="#444" stroke-width="0.8"/><rect x="48" y="158" width="4" height="3.8" fill="#555"/><rect x="54" y="158" width="12" height="3.8" fill="#888"/><rect x="48" y="165" width="4" height="3.8" fill="#555"/><rect x="54" y="165" width="12" height="3.8" fill="#888"/><rect x="48" y="172" width="4" height="3.8" fill="#555"/><rect x="54" y="172" width="12" height="3.8" fill="#888"/><rect x="1693" y="160" width="16" height="2.2" fill="#3c7bc0"/><rect x="1698.5" y="158" width="5" height="2.5" rx="1" fill="#3c7bc0"/><rect x="1694" y="163" width="14" height="13.5" fill="#5e5e5e"/><rect x="1696.5" y="165" width="1.8" height="9" fill="#fff"/><rect x="1700.1" y="165" width="1.8" height="9" fill="#fff"/><rect x="1703.7" y="165" width="1.8" height="9" fill="#fff"/><circle cx="1724" cy="168" r="4.8" fill="none" stroke="#555" stroke-width="0.9"/><path d="M1724 165.5v5" stroke="#555" stroke-width="1"/><path d="M1901.5 165.5h8l-4 4z" fill="#666"/><path d="M1876.5 203l-5.3 5.5 5.3 5.3" fill="none" stroke="#fff" stroke-width="1.3"/><rect x="1881.9" y="196.1" width="21.7" height="23.9" rx="0.8" fill="#fff"/><path d="M1886 199.5v-3.2q0-1.5 2-2.2l1.6-0.6q1-2.6 3.1-2.6t3.1 2.6l1.6 0.6q2 0.7 2 2.2v3.2z" fill="#fff" stroke="#5230a0" stroke-width="1"/><circle cx="1892.7" cy="194.2" r="0.9" fill="#5230a0"/><circle cx="1886.8" cy="206.3" r="2" fill="none" stroke="#5230a0" stroke-width="1.4"/><circle cx="1886.8" cy="214.4" r="2" fill="none" stroke="#5230a0" stroke-width="1.4"/><g stroke="#5230a0" stroke-width="1.2" stroke-dasharray="1 1.2"><circle cx="1886.8" cy="206.3" r="3" fill="none"/><circle cx="1886.8" cy="214.4" r="3" fill="none"/></g><path d="M1892 204.4h9.6M1892 207.3h9.6M1892 212.4h9.6M1892 215.3h9.6" stroke="#5230a0" stroke-width="1.1"/><path d="M216 603.5l-4 4.5 4 4.5" fill="none" stroke="#fff" stroke-width="1.3"/><rect x="1910.5" y="185.5" width="7" height="851" fill="#fafafa" stroke="#c4c4c4" stroke-width="1"/><rect x="1911.5" y="597.5" width="5" height="25" rx="1.5" fill="#e2e2e2" stroke="#b4b4b4" stroke-width="0.8"/><g fill="#7a4fc2"><circle cx="186.9" cy="198.9" r="6.7"/><rect x="184.9" y="189.9" width="4" height="4" transform="rotate(0 186.9 198.9)"/><rect x="184.9" y="189.9" width="4" height="4" transform="rotate(60 186.9 198.9)"/><rect x="184.9" y="189.9" width="4" height="4" transform="rotate(120 186.9 198.9)"/><rect x="184.9" y="189.9" width="4" height="4" transform="rotate(180 186.9 198.9)"/><rect x="184.9" y="189.9" width="4" height="4" transform="rotate(240 186.9 198.9)"/><rect x="184.9" y="189.9" width="4" height="4" transform="rotate(300 186.9 198.9)"/></g><circle cx="186.9" cy="198.9" r="2.9" fill="#fff"/><circle cx="24.5" cy="245.5" r="5" fill="none" stroke="#5f5f5f" stroke-width="1.2"/><path d="M21 249l-4.5 4.5" stroke="#5f5f5f" stroke-width="1.3"/><path d="M16.2 276.5A8.2 8.2 0 1 1 16.2 288.5" fill="none" stroke="#5f5f5f" stroke-width="2.6"/><path d="M13.6 273.2v8.2h7.4" fill="none" stroke="#5f5f5f" stroke-width="2.6"/><path d="M17.3 309.2h7.5l5 5v12.2q0 1.2-1.2 1.2h-11.3q-1.2 0-1.2-1.2v-16q0-1.2 1.2-1.2z" fill="none" stroke="#5f5f5f" stroke-width="1.8"/><path d="M24.3 309.3v4.2h4.3z" fill="#5f5f5f"/><path d="M19.3 318.3h7M19.3 321.5h7" stroke="#5f5f5f" stroke-width="1.4"/><path d="M17.3 371.09999999999997h7.5l5 5v12.2q0 1.2-1.2 1.2h-11.3q-1.2 0-1.2-1.2v-16q0-1.2 1.2-1.2z" fill="none" stroke="#5f5f5f" stroke-width="1.8"/><path d="M24.3 371.2v4.2h4.3z" fill="#5f5f5f"/><path d="M19.3 380.2h7M19.3 383.4h7" stroke="#5f5f5f" stroke-width="1.4"/><path d="M17.3 517.4h7.5l5 5v12.2q0 1.2-1.2 1.2h-11.3q-1.2 0-1.2-1.2v-16q0-1.2 1.2-1.2z" fill="none" stroke="#5f5f5f" stroke-width="1.8"/><path d="M24.3 517.5v4.2h4.3z" fill="#5f5f5f"/><path d="M19.3 526.5h7M19.3 529.7h7" stroke="#5f5f5f" stroke-width="1.4"/><rect x="13.9" y="421" width="17.2" height="2.6" fill="#666"/><rect x="19.5" y="418.3" width="6" height="2.4" rx="1" fill="#666"/><path d="M15.6 424.8h13.8v12q0 1-1 1h-11.8q-1 0-1-1z" fill="#666"/><rect x="18.6" y="427" width="1.9" height="8.5" fill="#fff"/><rect x="21.6" y="427" width="1.9" height="8.5" fill="#fff"/><rect x="24.6" y="427" width="1.9" height="8.5" fill="#fff"/><path d="M20 486.2h-7.7q-1.2 0-1.2-1.2v-16q0-1.2 1.2-1.2h7.3l4.6 4.6" fill="none" stroke="#5f5f5f" stroke-width="1.8"/><path d="M19.5 468.2v4.2h4.3z" fill="#5f5f5f"/><circle cx="25.3" cy="480.3" r="3.6" fill="none" stroke="#5f5f5f" stroke-width="1.6"/><path d="M28 483l3.7 3.7" stroke="#5f5f5f" stroke-width="1.9"/><circle cx="48" cy="1017.5" r="4" fill="#8b5cc9"/><rect x="46" y="1021" width="4" height="3" fill="#8b5cc9"/><path d="M41 1017.5h2M53 1017.5h2M43 1012l1.5 1.5M53 1012l-1.5 1.5M48 1011v1" stroke="#8b5cc9" stroke-width="1"/></svg><div style="left:710px;top:236px;width:505px;height:612px;background:#fff;border:1px solid #5a5a5a;box-shadow:2px 4px 16px rgba(0,0,0,0.33)"></div><div class="t" style="left:740px;top:243.0px;font-size:11.4px;line-height:15px;color:#111;">Edit 2 event(s)</div><svg style="left:1194px;top:245px" width="11" height="11"><path d="M0.5 0.5l10 10M10.5 0.5l-10 10" stroke="#111" stroke-width="1.1"/></svg><div style="left:711px;top:266px;width:502px;height:32px;background:#efefef"></div><div style="left:723px;top:271px;width:28px;height:24px;background:#f8f8f8;border:1px solid #e0e0e0"></div><div style="left:756px;top:271px;width:413px;height:24px;background:#f9f9f9;border:1px solid #e2e2e2"></div><div class="t" style="left:762px;top:276.0px;font-size:11.5px;line-height:15px;color:#7f7f7f;">Quick search</div><div style="left:1174px;top:271px;width:28px;height:24px;background:#f8f8f8;border:1px solid #e0e0e0"></div><svg style="left:0;top:0" width="1" height="1"><g transform="translate(711 237)"><circle cx="16" cy="13" r="7.4" fill="none" stroke="#8e55b0" stroke-width="1.2"/><ellipse cx="13.7" cy="9.4" rx="1.9" ry="1" fill="#8e55b0"/><ellipse cx="18.3" cy="9.4" rx="1.9" ry="1" fill="#8e55b0"/><path d="M10.6 11.9h4.4q0 4.2-2.1 5.9q-2-1.7-2.3-5.9z" fill="#8e55b0"/><path d="M21.4 11.9h-4.4q0 4.2 2.1 5.9q2-1.7 2.3-5.9z" fill="#8e55b0"/><path d="M14.3 18.8l1.7-3.6 1.7 3.6z" fill="#8e55b0"/></g><path d="M738 277l6.5 6.5-5 5h-5l-4.5-4.5z" fill="#a3a3a3"/><path d="M735 289.5h9" stroke="#a3a3a3" stroke-width="1.3"/><path d="M734 282.5l5.5 5.5" stroke="#f8f8f8" stroke-width="1.2"/><circle cx="1186" cy="281.5" r="4.6" fill="none" stroke="#2e6aa8" stroke-width="2"/><path d="M1189.5 285l3.5 3.5" stroke="#2e6aa8" stroke-width="2.3"/></svg><div style="left:872px;top:302px;width:317px;height:31px;background:#f4f4f4"></div><div class="t" style="left:725px;top:306.5px;font-size:11.8px;line-height:15px;color:#333;">Subject</div><svg style="left:886.5px;top:317.8px" width="1" height="1"><g transform="rotate(45)" fill="#2f6aa5"><rect x="-2.3" y="-4.6" width="4.6" height="11"/><rect x="-2.3" y="-9.6" width="4.6" height="3.6" rx="0.6"/><path d="M-2.3 7.2h4.6L0 10.5z"/></g><path d="M-5.6 7.6l1.6-1.8" stroke="#f4f4f4" stroke-width="0.9"/></svg><div style="left:872px;top:341px;width:317px;height:36px;background:#f4f4f4"></div><div class="t" style="left:725px;top:345.5px;font-size:11.8px;line-height:15px;color:#333;">Hide Attendees</div><svg style="left:886.5px;top:359.3px" width="1" height="1"><g transform="rotate(45)" fill="#2f6aa5"><rect x="-2.3" y="-4.6" width="4.6" height="11"/><rect x="-2.3" y="-9.6" width="4.6" height="3.6" rx="0.6"/><path d="M-2.3 7.2h4.6L0 10.5z"/></g><path d="M-5.6 7.6l1.6-1.8" stroke="#f4f4f4" stroke-width="0.9"/></svg><div style="left:872px;top:385px;width:317px;height:31px;background:#f4f4f4"></div><div class="t" style="left:725px;top:389.5px;font-size:11.8px;line-height:15px;color:#333;">Importance</div><svg style="left:886.5px;top:400.8px" width="1" height="1"><g transform="rotate(45)" fill="#2f6aa5"><rect x="-2.3" y="-4.6" width="4.6" height="11"/><rect x="-2.3" y="-9.6" width="4.6" height="3.6" rx="0.6"/><path d="M-2.3 7.2h4.6L0 10.5z"/></g><path d="M-5.6 7.6l1.6-1.8" stroke="#f4f4f4" stroke-width="0.9"/></svg><div style="left:872px;top:424px;width:317px;height:36px;background:#f4f4f4"></div><div class="t" style="left:725px;top:428.5px;font-size:11.8px;line-height:15px;color:#333;">Is All Day</div><svg style="left:886.5px;top:442.3px" width="1" height="1"><g transform="rotate(45)" fill="#2f6aa5"><rect x="-2.3" y="-4.6" width="4.6" height="11"/><rect x="-2.3" y="-9.6" width="4.6" height="3.6" rx="0.6"/><path d="M-2.3 7.2h4.6L0 10.5z"/></g><path d="M-5.6 7.6l1.6-1.8" stroke="#f4f4f4" stroke-width="0.9"/></svg><div style="left:872px;top:468px;width:317px;height:34px;background:#f4f4f4"></div><div class="t" style="left:725px;top:472.5px;font-size:11.8px;line-height:15px;color:#333;">Start Time (UTC)</div><div style="left:872px;top:510px;width:317px;height:31px;background:#f4f4f4"></div><div class="t" style="left:725px;top:514.0px;font-size:11.8px;line-height:15px;color:#333;">End Time (UTC)</div><svg style="left:886.5px;top:525.8px" width="1" height="1"><g transform="rotate(45)" fill="#2f6aa5"><rect x="-2.3" y="-4.6" width="4.6" height="11"/><rect x="-2.3" y="-9.6" width="4.6" height="3.6" rx="0.6"/><path d="M-2.3 7.2h4.6L0 10.5z"/></g><path d="M-5.6 7.6l1.6-1.8" stroke="#f4f4f4" stroke-width="0.9"/></svg><div style="left:872px;top:549px;width:317px;height:31px;background:#f4f4f4"></div><div class="t" style="left:725px;top:553.5px;font-size:11.8px;line-height:15px;color:#333;">Is Draft</div><svg style="left:886.5px;top:564.8px" width="1" height="1"><g transform="rotate(45)" fill="#2f6aa5"><rect x="-2.3" y="-4.6" width="4.6" height="11"/><rect x="-2.3" y="-9.6" width="4.6" height="3.6" rx="0.6"/><path d="M-2.3 7.2h4.6L0 10.5z"/></g><path d="M-5.6 7.6l1.6-1.8" stroke="#f4f4f4" stroke-width="0.9"/></svg><div style="left:872px;top:593px;width:317px;height:36px;background:#f4f4f4"></div><div class="t" style="left:725px;top:597.5px;font-size:11.8px;line-height:15px;color:#333;">Is Reminder On</div><svg style="left:886.5px;top:611.3px" width="1" height="1"><g transform="rotate(45)" fill="#2f6aa5"><rect x="-2.3" y="-4.6" width="4.6" height="11"/><rect x="-2.3" y="-9.6" width="4.6" height="3.6" rx="0.6"/><path d="M-2.3 7.2h4.6L0 10.5z"/></g><path d="M-5.6 7.6l1.6-1.8" stroke="#f4f4f4" stroke-width="0.9"/></svg><div style="left:872px;top:637px;width:317px;height:31px;background:#f4f4f4"></div><svg style="left:886.5px;top:652.8px" width="1" height="1"><g transform="rotate(45)" fill="#2f6aa5"><rect x="-2.3" y="-4.6" width="4.6" height="11"/><rect x="-2.3" y="-9.6" width="4.6" height="3.6" rx="0.6"/><path d="M-2.3 7.2h4.6L0 10.5z"/></g><path d="M-5.6 7.6l1.6-1.8" stroke="#f4f4f4" stroke-width="0.9"/></svg><div style="left:872px;top:677px;width:317px;height:34px;background:#f4f4f4"></div><div class="t" style="left:725px;top:680.5px;font-size:11.8px;line-height:15px;color:#333;">Response Requested</div><svg style="left:886.5px;top:694.3px" width="1" height="1"><g transform="rotate(45)" fill="#2f6aa5"><rect x="-2.3" y="-4.6" width="4.6" height="11"/><rect x="-2.3" y="-9.6" width="4.6" height="3.6" rx="0.6"/><path d="M-2.3 7.2h4.6L0 10.5z"/></g><path d="M-5.6 7.6l1.6-1.8" stroke="#f4f4f4" stroke-width="0.9"/></svg><div style="left:872px;top:720px;width:317px;height:31px;background:#f4f4f4"></div><div class="t" style="left:725px;top:724.5px;font-size:11.8px;line-height:15px;color:#333;">Sensitivity</div><svg style="left:886.5px;top:735.8px" width="1" height="1"><g transform="rotate(45)" fill="#2f6aa5"><rect x="-2.3" y="-4.6" width="4.6" height="11"/><rect x="-2.3" y="-9.6" width="4.6" height="3.6" rx="0.6"/><path d="M-2.3 7.2h4.6L0 10.5z"/></g><path d="M-5.6 7.6l1.6-1.8" stroke="#f4f4f4" stroke-width="0.9"/></svg><div style="left:872px;top:760px;width:317px;height:30px;background:#f4f4f4"></div><div class="t" style="left:725px;top:763.0px;font-size:11.8px;line-height:15px;color:#333;">Show As</div><svg style="left:886.5px;top:775.3px" width="1" height="1"><g transform="rotate(45)" fill="#2f6aa5"><rect x="-2.3" y="-4.6" width="4.6" height="11"/><rect x="-2.3" y="-9.6" width="4.6" height="3.6" rx="0.6"/><path d="M-2.3 7.2h4.6L0 10.5z"/></g><path d="M-5.6 7.6l1.6-1.8" stroke="#f4f4f4" stroke-width="0.9"/></svg><div class="t" style="left:725px;top:641.0px;font-size:11.6px;line-height:15px;color:#333;">Reminder Before Start</div><div class="t" style="left:725px;top:653.0px;font-size:11.6px;line-height:15px;color:#333;">(Minutes)</div><div class="t" style="left:905px;top:309.5px;font-size:11.8px;line-height:15px;color:#222;">Project ABC: phase 2</div><div style="left:911px;top:348px;width:50px;height:20px;background:#fff"></div><div style="left:922px;top:349px;width:38px;height:18px;background:#cdcdcd"></div><div style="left:912px;top:349px;width:7px;height:18px;background:#6f6f6f"></div><div style="left:922px;top:352px;width:35px;height:12px;background:#808080"></div><div class="t" style="left:971px;top:349.5px;font-size:11.8px;line-height:15px;color:#222;">False</div><div style="left:911px;top:431px;width:50px;height:20px;background:#fff"></div><div style="left:922px;top:432px;width:38px;height:18px;background:#cdcdcd"></div><div style="left:912px;top:432px;width:7px;height:18px;background:#6f6f6f"></div><div style="left:922px;top:435px;width:35px;height:12px;background:#808080"></div><div class="t" style="left:971px;top:432.5px;font-size:11.8px;line-height:15px;color:#222;">False</div><div class="t" style="left:903px;top:392.5px;font-size:11.8px;line-height:15px;color:#8a8a8a;">Normal</div><svg style="left:1158px;top:390px" width="12" height="18"><path d="M2 7l4-4 4 4z M2 11l4 4 4-4z" fill="#9a9a9a"/></svg><svg style="left:1158px;top:725px" width="12" height="18"><path d="M2 7l4-4 4 4z M2 11l4 4 4-4z" fill="#9a9a9a"/></svg><svg style="left:878px;top:477px" width="16" height="16"><path d="M4.5 3.8A6 6 0 1 1 2.2 9" fill="none" stroke="#2e6aa8" stroke-width="2"/><path d="M1.5 2v5h5z" fill="#2e6aa8"/></svg><div style="left:902px;top:476px;width:270px;height:21px;background:#fff;border:1px solid #d4d4d4"></div><div class="t" style="left:910px;top:479.0px;font-size:11.8px;line-height:15px;color:#222;">2024-05-30 18:30</div><div style="left:1201px;top:316px;width:10px;height:455px;background:#8c8c8c;border-radius:5px"></div><svg style="left:1201px;top:302px" width="10" height="8"><path d="M0.5 6.5L5 2l4.5 4.5z" fill="#8c8c8c"/></svg><svg style="left:1201px;top:792px" width="10" height="8"><path d="M0.5 1.5L5 6l4.5-4.5z" fill="#8c8c8c"/></svg><div style="left:711px;top:794px;width:488px;height:12px;background:#efefef"></div><div style="left:711px;top:806px;width:502px;height:1px;background:#e3e3e3"></div><div style="left:876px;top:811px;width:90px;height:21px;background:#e6e6e6;border:1px solid #adadad"></div><div class="t" style="left:621px;width:600px;text-align:center;top:814.0px;font-size:11.8px;line-height:15px;color:#222;">Reset</div><div style="left:985px;top:811px;width:90px;height:21px;background:#e6e6e6;border:1px solid #adadad"></div><div class="t" style="left:730px;width:600px;text-align:center;top:814.0px;font-size:11.8px;line-height:15px;color:#222;">Apply</div><div style="left:1094px;top:811px;width:90px;height:21px;background:#e6e6e6;border:1px solid #adadad"></div><div class="t" style="left:839px;width:600px;text-align:center;top:814.0px;font-size:11.8px;line-height:15px;color:#222;">Cancel</div><div style="left:1211px;top:843.5px;width:2px;height:2px;background:#c8c8c8"></div><div style="left:1207px;top:843.5px;width:2px;height:2px;background:#c8c8c8"></div><div style="left:1203px;top:843.5px;width:2px;height:2px;background:#c8c8c8"></div><div style="left:1211px;top:839.5px;width:2px;height:2px;background:#c8c8c8"></div><div style="left:1207px;top:839.5px;width:2px;height:2px;background:#c8c8c8"></div><div style="left:1211px;top:835.5px;width:2px;height:2px;background:#c8c8c8"></div><div style="left:902px;top:497px;width:204px;height:293px;background:#fff;border:1px solid #c9c9c9;border-radius:4px"></div><div style="left:906px;top:500px;width:197px;height:29px;background:#e8e8e8;border-radius:4px"></div><div class="t" style="left:916px;top:506.0px;font-size:12px;line-height:16px;color:#222;font-weight:bold;">Prev</div><div class="t" style="left:704px;width:600px;text-align:center;top:507.0px;font-size:12px;line-height:16px;color:#222;font-weight:bold;">May 2024</div><div class="t" style="right:826px;top:506.0px;font-size:12px;line-height:16px;color:#222;font-weight:bold;">Next</div><div class="t" style="left:619.5px;width:600px;text-align:center;top:537.5px;font-size:11.8px;line-height:15px;color:#222;font-weight:bold;">Su</div><div class="t" style="left:649.0px;width:600px;text-align:center;top:537.5px;font-size:11.8px;line-height:15px;color:#222;font-weight:bold;">Mo</div><div class="t" style="left:678.0px;width:600px;text-align:center;top:537.5px;font-size:11.8px;line-height:15px;color:#222;font-weight:bold;">Tu</div><div class="t" style="left:707.0px;width:600px;text-align:center;top:537.5px;font-size:11.8px;line-height:15px;color:#222;font-weight:bold;">We</div><div class="t" style="left:736.5px;width:600px;text-align:center;top:537.5px;font-size:11.8px;line-height:15px;color:#222;font-weight:bold;">Th</div><div class="t" style="left:763.0px;width:600px;text-align:center;top:537.5px;font-size:11.8px;line-height:15px;color:#222;font-weight:bold;">Fr</div><div class="t" style="left:789.5px;width:600px;text-align:center;top:537.5px;font-size:11.8px;line-height:15px;color:#222;font-weight:bold;">Sa</div><div style="left:992px;top:562px;width:30px;height:22px;background:#f6f6f6;border:1px solid #c6c6c6"></div><div class="t" style="right:901px;top:566.0px;font-size:11.8px;line-height:15px;color:#333;">1</div><div style="left:1024px;top:562px;width:25px;height:22px;background:#f6f6f6;border:1px solid #c6c6c6"></div><div class="t" style="right:874px;top:566.0px;font-size:11.8px;line-height:15px;color:#333;">2</div><div style="left:1051px;top:562px;width:24px;height:22px;background:#f6f6f6;border:1px solid #c6c6c6"></div><div class="t" style="right:848px;top:566.0px;font-size:11.8px;line-height:15px;color:#333;">3</div><div style="left:1077px;top:562px;width:25px;height:22px;background:#f6f6f6;border:1px solid #c6c6c6"></div><div class="t" style="right:821px;top:566.0px;font-size:11.8px;line-height:15px;color:#333;">4</div><div style="left:907px;top:587px;width:25px;height:22px;background:#f6f6f6;border:1px solid #c6c6c6"></div><div class="t" style="right:991px;top:591.0px;font-size:11.8px;line-height:15px;color:#333;">5</div><div style="left:934px;top:587px;width:30px;height:22px;background:#f6f6f6;border:1px solid #c6c6c6"></div><div class="t" style="right:959px;top:591.0px;font-size:11.8px;line-height:15px;color:#333;">6</div><div style="left:966px;top:587px;width:24px;height:22px;background:#f6f6f6;border:1px solid #c6c6c6"></div><div class="t" style="right:933px;top:591.0px;font-size:11.8px;line-height:15px;color:#333;">7</div><div style="left:992px;top:587px;width:30px;height:22px;background:#f6f6f6;border:1px solid #c6c6c6"></div><div class="t" style="right:901px;top:591.0px;font-size:11.8px;line-height:15px;color:#333;">8</div><div style="left:1024px;top:587px;width:25px;height:22px;background:#f6f6f6;border:1px solid #c6c6c6"></div><div class="t" style="right:874px;top:591.0px;font-size:11.8px;line-height:15px;color:#333;">9</div><div style="left:1051px;top:587px;width:24px;height:22px;background:#f6f6f6;border:1px solid #c6c6c6"></div><div class="t" style="right:848px;top:591.0px;font-size:11.8px;line-height:15px;color:#333;">10</div><div style="left:1077px;top:587px;width:25px;height:22px;background:#f6f6f6;border:1px solid #c6c6c6"></div><div class="t" style="right:821px;top:591.0px;font-size:11.8px;line-height:15px;color:#333;">11</div><div style="left:907px;top:611px;width:25px;height:22px;background:#f6f6f6;border:1px solid #c6c6c6"></div><div class="t" style="right:991px;top:615.0px;font-size:11.8px;line-height:15px;color:#333;">12</div><div style="left:934px;top:611px;width:30px;height:22px;background:#f6f6f6;border:1px solid #c6c6c6"></div><div class="t" style="right:959px;top:615.0px;font-size:11.8px;line-height:15px;color:#333;">13</div><div style="left:966px;top:611px;width:24px;height:22px;background:#f6f6f6;border:1px solid #c6c6c6"></div><div class="t" style="right:933px;top:615.0px;font-size:11.8px;line-height:15px;color:#333;">14</div><div style="left:992px;top:611px;width:30px;height:22px;background:#f6f6f6;border:1px solid #c6c6c6"></div><div class="t" style="right:901px;top:615.0px;font-size:11.8px;line-height:15px;color:#333;">15</div><div style="left:1024px;top:611px;width:25px;height:22px;background:#f6f6f6;border:1px solid #c6c6c6"></div><div class="t" style="right:874px;top:615.0px;font-size:11.8px;line-height:15px;color:#333;">16</div><div style="left:1051px;top:611px;width:24px;height:22px;background:#f6f6f6;border:1px solid #c6c6c6"></div><div class="t" style="right:848px;top:615.0px;font-size:11.8px;line-height:15px;color:#333;">17</div><div style="left:1077px;top:611px;width:25px;height:22px;background:#f6f6f6;border:1px solid #c6c6c6"></div><div class="t" style="right:821px;top:615.0px;font-size:11.8px;line-height:15px;color:#333;">18</div><div style="left:907px;top:635px;width:25px;height:22px;background:#f6f6f6;border:1px solid #c6c6c6"></div><div class="t" style="right:991px;top:639.0px;font-size:11.8px;line-height:15px;color:#333;">19</div><div style="left:934px;top:635px;width:30px;height:22px;background:#f6f6f6;border:1px solid #c6c6c6"></div><div class="t" style="right:959px;top:639.0px;font-size:11.8px;line-height:15px;color:#333;">20</div><div style="left:966px;top:635px;width:24px;height:22px;background:#f6f6f6;border:1px solid #c6c6c6"></div><div class="t" style="right:933px;top:639.0px;font-size:11.8px;line-height:15px;color:#333;">21</div><div style="left:992px;top:635px;width:30px;height:22px;background:#f6f6f6;border:1px solid #c6c6c6"></div><div class="t" style="right:901px;top:639.0px;font-size:11.8px;line-height:15px;color:#333;">22</div><div style="left:1024px;top:635px;width:25px;height:22px;background:#fdf590;border:1px solid #d8cf60"></div><div class="t" style="right:874px;top:639.0px;font-size:11.8px;line-height:15px;color:#333;">23</div><div style="left:1051px;top:635px;width:24px;height:22px;background:#f6f6f6;border:1px solid #c6c6c6"></div><div class="t" style="right:848px;top:639.0px;font-size:11.8px;line-height:15px;color:#333;">24</div><div style="left:1077px;top:635px;width:25px;height:22px;background:#f6f6f6;border:1px solid #c6c6c6"></div><div class="t" style="right:821px;top:639.0px;font-size:11.8px;line-height:15px;color:#333;">25</div><div style="left:907px;top:660px;width:25px;height:22px;background:#f6f6f6;border:1px solid #c6c6c6"></div><div class="t" style="right:991px;top:664.0px;font-size:11.8px;line-height:15px;color:#333;">26</div><div style="left:934px;top:660px;width:30px;height:22px;background:#f6f6f6;border:1px solid #c6c6c6"></div><div class="t" style="right:959px;top:664.0px;font-size:11.8px;line-height:15px;color:#333;">27</div><div style="left:966px;top:660px;width:24px;height:22px;background:#f6f6f6;border:1px solid #c6c6c6"></div><div class="t" style="right:933px;top:664.0px;font-size:11.8px;line-height:15px;color:#333;">28</div><div style="left:992px;top:660px;width:30px;height:22px;background:#f6f6f6;border:1px solid #c6c6c6"></div><div class="t" style="right:901px;top:664.0px;font-size:11.8px;line-height:15px;color:#333;">29</div><div style="left:1024px;top:660px;width:25px;height:22px;background:#0a6cf5;border:1px solid #0a6cf5"></div><div class="t" style="right:874px;top:664.0px;font-size:11.8px;line-height:15px;color:#fff;">30</div><div style="left:1051px;top:660px;width:24px;height:22px;background:#f6f6f6;border:1px solid #c6c6c6"></div><div class="t" style="right:848px;top:664.0px;font-size:11.8px;line-height:15px;color:#333;">31</div><div class="t" style="left:911px;top:687.5px;font-size:11.8px;line-height:15px;color:#333;">Time</div><div class="t" style="left:987px;top:686.5px;font-size:11.8px;line-height:15px;color:#333;">18:30</div><div style="left:985px;top:705px;width:103px;height:1px;background:#444"></div><div class="t" style="left:911px;top:716.5px;font-size:11.8px;line-height:15px;color:#333;">Hour</div><div class="t" style="left:911px;top:736.5px;font-size:11.8px;line-height:15px;color:#333;">Minute</div><div style="left:985px;top:716px;width:108px;height:10px;background:#fff;border:1px solid #cfcfcf;border-radius:5px"></div><div style="left:1063px;top:713px;width:12px;height:15px;background:#f2f2f2;border:1px solid #c5c5c5;border-radius:3px"></div><div style="left:985px;top:736px;width:108px;height:10px;background:#fff;border:1px solid #cfcfcf;border-radius:5px"></div><div style="left:1033px;top:733px;width:13px;height:15px;background:#f2f2f2;border:1px solid #c5c5c5;border-radius:3px"></div><div style="left:906px;top:755px;width:197px;height:1px;background:#dcdcdc"></div><div style="left:911px;top:762px;width:40px;height:24px;background:#f6f6f6;border:1px solid #d0d0d0;border-radius:3px"></div><div class="t" style="left:631px;width:600px;text-align:center;top:766.0px;font-size:11.8px;line-height:15px;color:#8a8a8a;">Now</div><div style="left:1052px;top:762px;width:46px;height:24px;background:#f6f6f6;border:1px solid #c6c6c6;border-radius:3px"></div><div class="t" style="left:775px;width:600px;text-align:center;top:765.5px;font-size:12px;line-height:16px;color:#222;font-weight:bold;">Done</div><div style="left:686px;top:129px;width:40px;height:40px;border-radius:20px;background:#f6209c;box-shadow:1px 3px 4px rgba(0,0,0,0.35)"></div><div class="t" style="left:406px;width:600px;text-align:center;top:135.0px;font-size:25px;line-height:30px;color:#fff;">1</div><div style="left:437px;top:504px;width:40px;height:40px;border-radius:20px;background:#f6209c;box-shadow:1px 3px 4px rgba(0,0,0,0.35)"></div><div class="t" style="left:157px;width:600px;text-align:center;top:510.0px;font-size:25px;line-height:30px;color:#fff;">1</div><div style="left:811px;top:460px;width:40px;height:40px;border-radius:20px;background:#f6209c;box-shadow:1px 3px 4px rgba(0,0,0,0.35)"></div><div class="t" style="left:531px;width:600px;text-align:center;top:466.0px;font-size:25px;line-height:30px;color:#fff;">2</div><div style="left:1020px;top:833px;width:40px;height:40px;border-radius:20px;background:#f6209c;box-shadow:1px 3px 4px rgba(0,0,0,0.35)"></div><div class="t" style="left:740px;width:600px;text-align:center;top:839.0px;font-size:25px;line-height:30px;color:#fff;">3</div></div></body></html>
